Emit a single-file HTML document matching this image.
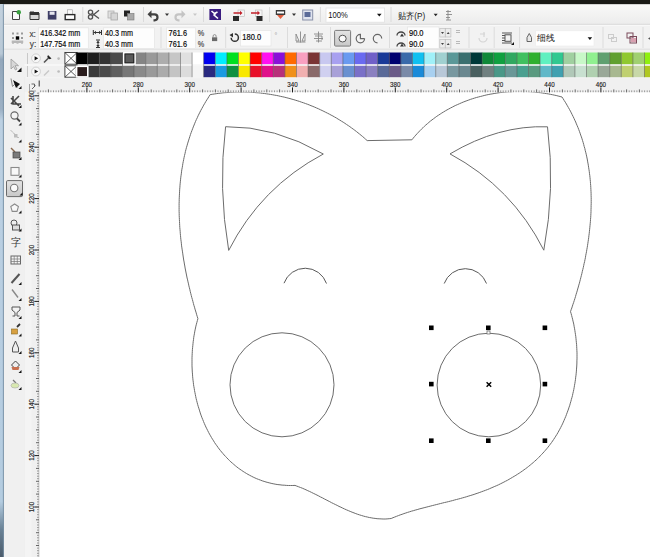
<!DOCTYPE html>
<html><head><meta charset="utf-8">
<style>
*{margin:0;padding:0;box-sizing:border-box}
html,body{width:650px;height:557px;overflow:hidden;background:#f0f0f0;font-family:"Liberation Sans",sans-serif}
svg{position:absolute;left:0;top:0;font-family:"Liberation Sans",sans-serif}
</style></head><body>
<svg width="650" height="557" viewBox="0 0 650 557">
 <defs>
  <linearGradient id="tbg" x1="0" y1="0" x2="0" y2="1"><stop offset="0" stop-color="#f9f9f8"/><stop offset="1" stop-color="#ececec"/></linearGradient>
  <linearGradient id="lsg" x1="0" y1="0" x2="0" y2="1"><stop offset="0" stop-color="#c4d2de"/><stop offset="0.09" stop-color="#b8c8d6"/><stop offset="0.1" stop-color="#94a8bc"/><stop offset="0.19" stop-color="#9cb0c4"/><stop offset="0.21" stop-color="#bcd0e2"/><stop offset="0.9" stop-color="#b4cce0"/><stop offset="0.95" stop-color="#6a8296"/><stop offset="1" stop-color="#4a5a6a"/></linearGradient>
  <linearGradient id="btn" x1="0" y1="0" x2="0" y2="1"><stop offset="0" stop-color="#e4e4e4"/><stop offset="1" stop-color="#c8c8c8"/></linearGradient>
 </defs>
 <!-- base backgrounds -->
 <rect x="0" y="0" width="650" height="557" fill="#f0f0f0"/>
 <!-- canvas -->
 <rect x="39" y="92" width="611" height="465" fill="#ffffff"/>
 <g fill="none" stroke="#6c6c6c" stroke-width="1">
  <path d="M210.2 94.6 L212.2 94.3 L214.2 94.0 L216.2 93.7 L218.2 93.4 L220.2 93.2 L222.2 92.9 L224.2 92.7 L226.2 92.6 L228.2 92.4 L230.2 92.3 L232.2 92.2 L234.3 92.1 L236.3 92.0 L238.3 92.0 L240.3 92.0 L242.3 92.0 L244.3 92.0 L246.3 92.1 L248.3 92.1 L250.4 92.2 L252.4 92.4 L254.4 92.5 L256.4 92.7 L258.4 92.8 L260.4 93.0 L262.4 93.3 L264.4 93.5 L266.4 93.8 L268.4 94.1 L270.4 94.4 L272.3 94.7 L274.3 95.1 L276.3 95.4 L278.3 95.8 L280.3 96.3 L282.2 96.7 L284.2 97.1 L286.1 97.6 L288.1 98.1 L290.0 98.6 L292.0 99.2 L293.9 99.7 L295.8 100.3 L297.8 100.9 L299.7 101.5 L301.6 102.2 L303.5 102.8 L305.4 103.5 L307.3 104.2 L309.2 104.9 L311.0 105.7 L312.9 106.4 L314.8 107.2 L316.6 108.0 L318.5 108.8 L320.3 109.7 L322.1 110.5 L323.9 111.4 L325.7 112.3 L327.5 113.2 L329.3 114.1 L331.1 115.1 L332.9 116.0 L334.6 117.0 L336.4 118.0 L338.1 119.1 L339.8 120.1 L341.5 121.2 L343.2 122.2 L344.9 123.3 L346.6 124.5 L348.3 125.6 L349.9 126.7 L351.5 127.9 L353.2 129.1 L354.8 130.3 L356.4 131.5 L358.0 132.8 L359.5 134.0 L361.1 135.3 L362.7 136.6 L364.2 137.9 L365.7 139.3 L367.2 140.6 L411.9 139.8 L413.2 138.2 L414.5 136.6 L415.8 135.1 L417.2 133.6 L418.6 132.1 L420.0 130.6 L421.4 129.2 L422.9 127.8 L424.3 126.4 L425.8 125.0 L427.4 123.7 L428.9 122.4 L430.4 121.1 L432.0 119.9 L433.6 118.7 L435.2 117.5 L436.8 116.3 L438.5 115.2 L440.2 114.1 L441.8 113.0 L443.5 112.0 L445.3 110.9 L447.0 109.9 L448.7 109.0 L450.5 108.0 L452.3 107.1 L454.0 106.2 L455.8 105.3 L457.7 104.5 L459.5 103.7 L461.3 102.9 L463.2 102.1 L465.0 101.4 L466.9 100.7 L468.8 100.0 L470.7 99.3 L472.6 98.7 L474.5 98.1 L476.4 97.5 L478.4 97.0 L480.3 96.5 L482.3 96.0 L484.2 95.5 L486.2 95.0 L488.2 94.6 L490.1 94.2 L492.1 93.9 L494.1 93.5 L496.1 93.2 L498.1 92.9 L500.1 92.6 L502.1 92.4 L504.1 92.2 L506.1 92.0 L508.1 91.8 L510.1 91.7 L512.2 91.6 L514.2 91.5 L516.2 91.4 L518.2 91.4 L520.3 91.4 L522.3 91.4 L524.3 91.5 L526.3 91.5 L528.3 91.6 L530.3 91.7 L532.4 91.9 L534.4 92.0 L536.4 92.2 L538.4 92.5 L540.4 92.7 L542.4 93.0 L544.4 93.3 L546.4 93.6 L548.3 93.9 L550.3 94.3 L552.3 94.7 L554.2 95.1 L556.2 95.5 L558.1 96.0 L560.1 96.5 L562.0 97.0 L563.1 98.7 L564.2 100.5 L565.3 102.2 L566.4 104.0 L567.4 105.8 L568.4 107.5 L569.4 109.3 L570.4 111.1 L571.3 112.9 L572.2 114.7 L573.1 116.5 L574.0 118.4 L574.8 120.2 L575.7 122.0 L576.4 123.9 L577.2 125.7 L578.0 127.6 L578.7 129.4 L579.4 131.3 L580.1 133.2 L580.7 135.1 L581.4 136.9 L582.0 138.8 L582.6 140.7 L583.2 142.6 L583.7 144.5 L584.2 146.5 L584.8 148.4 L585.2 150.3 L585.7 152.2 L586.2 154.2 L586.6 156.1 L587.0 158.0 L587.4 160.0 L587.7 161.9 L588.1 163.9 L588.4 165.8 L588.7 167.8 L589.0 169.8 L589.3 171.7 L589.5 173.7 L589.8 175.7 L590.0 177.7 L590.2 179.6 L590.4 181.6 L590.5 183.6 L590.7 185.6 L590.8 187.6 L590.9 189.6 L591.0 191.6 L591.1 193.6 L591.1 195.6 L591.2 197.6 L591.2 199.6 L591.2 201.6 L591.2 203.6 L591.1 205.6 L591.1 207.6 L591.0 209.6 L591.0 211.6 L590.9 213.6 L590.8 215.6 L590.7 217.6 L590.5 219.6 L590.4 221.6 L590.2 223.7 L590.0 225.7 L589.8 227.7 L589.6 229.7 L589.4 231.7 L589.2 233.7 L588.9 235.7 L588.7 237.7 L588.4 239.7 L588.1 241.7 L587.8 243.7 L587.5 245.7 L587.2 247.7 L586.8 249.7 L586.5 251.7 L586.1 253.7 L585.7 255.7 L585.4 257.7 L585.0 259.6 L584.6 261.6 L584.1 263.6 L583.7 265.6 L583.3 267.5 L582.8 269.5 L582.3 271.5 L581.9 273.4 L581.4 275.4 L580.9 277.3 L580.4 279.3 L579.9 281.2 L579.4 283.2 L578.8 285.1 L578.3 287.0 L577.7 289.0 L577.2 290.9 L576.6 292.8 L576.0 294.7 L575.5 296.6 L574.9 298.5 L574.3 300.4 L573.7 302.3 L573.0 304.2 L572.4 306.1 L571.8 308.0 L571.1 309.8 L570.5 311.7 L571.1 313.5 L571.6 315.4 L572.1 317.3 L572.6 319.2 L573.0 321.1 L573.5 323.0 L573.9 324.9 L574.2 326.8 L574.6 328.8 L574.9 330.7 L575.2 332.7 L575.5 334.7 L575.8 336.7 L576.0 338.7 L576.2 340.7 L576.4 342.7 L576.6 344.7 L576.7 346.7 L576.8 348.7 L576.9 350.7 L577.0 352.8 L577.0 354.8 L577.0 356.8 L577.0 358.9 L576.9 360.9 L576.9 363.0 L576.8 365.0 L576.7 367.0 L576.5 369.1 L576.4 371.1 L576.2 373.2 L576.0 375.2 L575.7 377.2 L575.5 379.3 L575.2 381.3 L574.9 383.3 L574.5 385.3 L574.2 387.4 L573.8 389.4 L573.4 391.4 L572.9 393.4 L572.5 395.4 L572.0 397.3 L571.4 399.3 L570.9 401.3 L570.3 403.2 L569.8 405.2 L569.1 407.1 L568.5 409.0 L567.8 410.9 L567.1 412.8 L566.4 414.7 L565.7 416.6 L564.9 418.4 L564.1 420.3 L563.3 422.1 L562.5 423.9 L561.6 425.7 L560.7 427.5 L559.8 429.2 L558.8 431.0 L557.9 432.7 L556.9 434.4 L555.8 436.1 L554.8 437.7 L553.7 439.4 L552.6 441.0 L551.5 442.6 L550.3 444.2 L549.2 445.7 L548.0 447.2 L546.7 448.8 L545.5 450.2 L544.2 451.7 L542.9 453.1 L541.6 454.5 L540.2 455.9 L538.9 457.3 L537.5 458.7 L536.1 460.0 L534.6 461.3 L533.2 462.6 L531.7 463.8 L530.2 465.1 L528.7 466.3 L527.2 467.5 L525.6 468.7 L524.0 469.8 L522.4 471.0 L520.8 472.1 L519.2 473.2 L517.6 474.2 L515.9 475.3 L514.2 476.3 L512.5 477.3 L510.8 478.3 L509.1 479.3 L507.4 480.3 L505.6 481.2 L503.9 482.1 L502.1 483.0 L500.3 483.9 L498.5 484.8 L496.7 485.6 L494.8 486.4 L493.0 487.2 L491.1 488.0 L489.3 488.8 L487.4 489.6 L485.5 490.3 L483.6 491.0 L481.7 491.7 L479.8 492.4 L477.9 493.1 L476.0 493.7 L474.1 494.4 L472.1 495.0 L470.2 495.6 L468.2 496.2 L466.3 496.8 L464.3 497.4 L462.4 497.9 L460.4 498.5 L458.4 499.0 L456.5 499.5 L454.5 500.0 L452.5 500.6 L450.5 501.1 L448.5 501.6 L446.6 502.1 L444.6 502.5 L442.6 503.0 L440.6 503.5 L438.7 504.0 L436.7 504.5 L434.7 505.0 L432.7 505.5 L430.8 506.0 L428.8 506.5 L426.9 507.0 L424.9 507.5 L423.0 508.0 L421.0 508.5 L419.1 509.0 L417.2 509.6 L415.2 510.1 L413.3 510.7 L411.4 511.2 L409.5 511.8 L407.6 512.4 L405.8 513.0 L403.9 513.6 L402.1 514.3 L400.2 514.9 L398.4 515.6 L396.6 516.3 L394.8 517.0 L393.0 517.7 L391.2 518.5 L389.2 518.7 L387.1 518.9 L385.1 519.0 L383.1 519.0 L381.1 518.9 L379.1 518.8 L377.1 518.7 L375.1 518.4 L373.2 518.2 L371.2 517.8 L369.3 517.5 L367.3 517.0 L365.4 516.6 L363.5 516.1 L361.6 515.5 L359.6 514.9 L357.7 514.3 L355.8 513.6 L354.0 512.9 L352.1 512.2 L350.2 511.4 L348.3 510.6 L346.4 509.8 L344.6 509.0 L342.7 508.1 L340.9 507.2 L339.0 506.4 L337.2 505.4 L335.3 504.5 L333.5 503.6 L331.6 502.7 L329.8 501.7 L328.0 500.8 L326.1 499.8 L324.3 498.9 L322.5 497.9 L320.6 497.0 L318.8 496.0 L317.0 495.1 L315.2 494.2 L313.3 493.3 L311.5 492.4 L309.7 491.5 L307.8 490.7 L306.0 489.8 L304.2 489.0 L302.3 488.2 L300.5 487.5 L298.7 486.8 L296.8 486.1 L295.0 485.4 L292.8 485.5 L290.6 485.5 L288.4 485.5 L286.3 485.4 L284.2 485.2 L282.1 485.1 L280.0 484.8 L277.9 484.6 L275.9 484.3 L273.9 483.9 L271.9 483.5 L269.9 483.0 L267.9 482.5 L266.0 482.0 L264.1 481.4 L262.2 480.8 L260.4 480.1 L258.5 479.4 L256.7 478.7 L254.9 477.9 L253.2 477.1 L251.4 476.2 L249.7 475.3 L248.0 474.4 L246.3 473.4 L244.7 472.4 L243.1 471.4 L241.5 470.3 L239.9 469.2 L238.3 468.1 L236.8 466.9 L235.3 465.7 L233.8 464.4 L232.4 463.2 L230.9 461.9 L229.5 460.6 L228.2 459.2 L226.8 457.8 L225.5 456.4 L224.2 455.0 L222.9 453.5 L221.6 452.0 L220.4 450.5 L219.2 449.0 L218.0 447.4 L216.9 445.8 L215.7 444.2 L214.6 442.6 L213.6 440.9 L212.5 439.2 L211.5 437.6 L210.5 435.8 L209.5 434.1 L208.6 432.4 L207.7 430.6 L206.8 428.8 L205.9 427.0 L205.1 425.2 L204.3 423.4 L203.5 421.5 L202.8 419.7 L202.0 417.8 L201.3 415.9 L200.6 414.0 L200.0 412.1 L199.4 410.1 L198.8 408.2 L198.2 406.3 L197.6 404.3 L197.1 402.3 L196.6 400.4 L196.1 398.4 L195.7 396.4 L195.3 394.4 L194.9 392.4 L194.5 390.4 L194.2 388.3 L193.8 386.3 L193.5 384.3 L193.3 382.3 L193.0 380.2 L192.8 378.2 L192.6 376.2 L192.5 374.1 L192.3 372.1 L192.2 370.0 L192.1 368.0 L192.0 365.9 L192.0 363.9 L192.0 361.9 L192.0 359.8 L192.0 357.8 L192.1 355.8 L192.2 353.7 L192.3 351.7 L192.4 349.7 L192.6 347.7 L192.8 345.7 L193.0 343.7 L193.2 341.7 L193.5 339.7 L193.7 337.7 L194.0 335.8 L194.4 333.8 L194.7 331.9 L195.1 329.9 L195.5 328.0 L195.9 326.1 L196.4 324.2 L196.9 322.3 L197.4 320.5 L197.9 318.6 L197.3 316.7 L196.7 314.8 L196.2 312.9 L195.6 311.0 L195.0 309.1 L194.5 307.2 L193.9 305.3 L193.4 303.4 L192.9 301.5 L192.4 299.5 L191.8 297.6 L191.3 295.6 L190.8 293.7 L190.3 291.7 L189.9 289.8 L189.4 287.8 L188.9 285.9 L188.5 283.9 L188.0 281.9 L187.6 279.9 L187.1 278.0 L186.7 276.0 L186.3 274.0 L185.9 272.0 L185.5 270.0 L185.1 268.0 L184.8 266.0 L184.4 264.0 L184.1 262.0 L183.7 260.0 L183.4 258.0 L183.1 256.0 L182.8 253.9 L182.5 251.9 L182.2 249.9 L181.9 247.9 L181.6 245.9 L181.4 243.8 L181.2 241.8 L180.9 239.8 L180.7 237.8 L180.5 235.7 L180.3 233.7 L180.2 231.7 L180.0 229.7 L179.8 227.6 L179.7 225.6 L179.6 223.6 L179.5 221.5 L179.4 219.5 L179.3 217.5 L179.2 215.4 L179.2 213.4 L179.1 211.4 L179.1 209.4 L179.1 207.3 L179.1 205.3 L179.1 203.3 L179.2 201.3 L179.2 199.3 L179.3 197.2 L179.4 195.2 L179.5 193.2 L179.6 191.2 L179.7 189.2 L179.9 187.2 L180.0 185.2 L180.2 183.2 L180.4 181.2 L180.6 179.2 L180.8 177.2 L181.1 175.2 L181.4 173.2 L181.6 171.2 L181.9 169.2 L182.3 167.3 L182.6 165.3 L182.9 163.3 L183.3 161.4 L183.7 159.4 L184.1 157.4 L184.5 155.5 L185.0 153.6 L185.4 151.6 L185.9 149.7 L186.4 147.7 L187.0 145.8 L187.5 143.9 L188.1 142.0 L188.7 140.1 L189.3 138.2 L189.9 136.3 L190.5 134.4 L191.2 132.5 L191.9 130.6 L192.6 128.8 L193.3 126.9 L194.1 125.0 L194.8 123.2 L195.6 121.3 L196.4 119.5 L197.3 117.7 L198.1 115.8 L199.0 114.0 L199.9 112.2 L200.8 110.4 L201.8 108.6 L202.8 106.8 L203.7 105.1 L204.8 103.3 L205.8 101.5 L206.9 99.8 L208.0 98.1 L209.1 96.3 L210.2 94.6 Z"/>
  <path d="M225.6 126.7 Q274.5 126 323.3 154 Q260.8 187.2 228.7 250.4 Q218 188.5 225.6 126.7 Z"/>
  <path d="M450 153.9 Q498.8 124.9 547.5 126.8 Q555.4 188.5 543.8 250.2 Q512.1 187.3 450 153.9 Z"/>
  <circle cx="282" cy="384.8" r="52"/>
  <circle cx="488.9" cy="385" r="51.8"/>
  <path d="M284 283.2 A22.5 22.5 0 0 1 326.5 283.5" stroke="#585858" stroke-width="1"/>
  <path d="M444.2 283.5 A22.5 22.5 0 0 1 486.5 283.5" stroke="#585858" stroke-width="1"/>
 </g>
 <rect x="487" y="331" width="3" height="3" fill="#fff" stroke="#666" stroke-width="0.7"/>
 <g fill="#000">
  <rect x="429" y="325.5" width="4.6" height="4.6"/><rect x="486" y="325.5" width="4.6" height="4.6"/><rect x="542.6" y="325.5" width="4.6" height="4.6"/>
  <rect x="429" y="381.8" width="4.6" height="4.6"/><rect x="542.6" y="381.8" width="4.6" height="4.6"/>
  <rect x="429" y="438.4" width="4.6" height="4.6"/><rect x="486" y="438.4" width="4.6" height="4.6"/><rect x="542.6" y="438.4" width="4.6" height="4.6"/>
 </g>
 <path d="M486.6 382.2 l4.6 4.6 M491.2 382.2 l-4.6 4.6" stroke="#000" stroke-width="1.4"/>

 <!-- rulers -->
 <rect x="26" y="77" width="624" height="15.3" fill="#f0f0f0"/>
 <rect x="26" y="77" width="13" height="480" fill="#f0f0f0"/>
 <line x1="26" y1="77.8" x2="650" y2="77.8" stroke="#fafafa" stroke-width="0.8"/>
 <line x1="38.9" y1="92" x2="38.9" y2="557" stroke="#a0a0a0" stroke-width="0.6"/>
 <line x1="24" y1="77" x2="24" y2="557" stroke="#e2e2e2" stroke-width="0.8"/>
 <rect x="24.5" y="92" width="7" height="465" fill="#f4f4f4"/>
 <line x1="39.2" y1="80.5" x2="39.2" y2="86.5" stroke="#333" stroke-width="1"/>
 <g>
 <line x1="40.6" y1="90.4" x2="40.6" y2="92.2" stroke="#808080" stroke-width="0.8"/>
<line x1="43.2" y1="90.4" x2="43.2" y2="92.2" stroke="#808080" stroke-width="0.8"/>
<line x1="45.8" y1="90.4" x2="45.8" y2="92.2" stroke="#808080" stroke-width="0.8"/>
<line x1="48.4" y1="89.4" x2="48.4" y2="92.4" stroke="#555" stroke-width="0.9"/>
<line x1="50.9" y1="90.4" x2="50.9" y2="92.2" stroke="#808080" stroke-width="0.8"/>
<line x1="53.5" y1="90.4" x2="53.5" y2="92.2" stroke="#808080" stroke-width="0.8"/>
<line x1="56.1" y1="90.4" x2="56.1" y2="92.2" stroke="#808080" stroke-width="0.8"/>
<line x1="58.6" y1="90.4" x2="58.6" y2="92.2" stroke="#808080" stroke-width="0.8"/>
<line x1="61.2" y1="89.4" x2="61.2" y2="92.4" stroke="#555" stroke-width="0.9"/>
<line x1="63.8" y1="90.4" x2="63.8" y2="92.2" stroke="#808080" stroke-width="0.8"/>
<line x1="66.3" y1="90.4" x2="66.3" y2="92.2" stroke="#808080" stroke-width="0.8"/>
<line x1="68.9" y1="90.4" x2="68.9" y2="92.2" stroke="#808080" stroke-width="0.8"/>
<line x1="71.5" y1="90.4" x2="71.5" y2="92.2" stroke="#808080" stroke-width="0.8"/>
<line x1="74.1" y1="89.4" x2="74.1" y2="92.4" stroke="#555" stroke-width="0.9"/>
<line x1="76.6" y1="90.4" x2="76.6" y2="92.2" stroke="#808080" stroke-width="0.8"/>
<line x1="79.2" y1="90.4" x2="79.2" y2="92.2" stroke="#808080" stroke-width="0.8"/>
<line x1="81.8" y1="90.4" x2="81.8" y2="92.2" stroke="#808080" stroke-width="0.8"/>
<line x1="84.3" y1="90.4" x2="84.3" y2="92.2" stroke="#808080" stroke-width="0.8"/>
<line x1="86.9" y1="87.4" x2="86.9" y2="92.4" stroke="#1a1a1a" stroke-width="1"/>
<line x1="89.5" y1="90.4" x2="89.5" y2="92.2" stroke="#808080" stroke-width="0.8"/>
<line x1="92.0" y1="90.4" x2="92.0" y2="92.2" stroke="#808080" stroke-width="0.8"/>
<line x1="94.6" y1="90.4" x2="94.6" y2="92.2" stroke="#808080" stroke-width="0.8"/>
<line x1="97.2" y1="90.4" x2="97.2" y2="92.2" stroke="#808080" stroke-width="0.8"/>
<line x1="99.8" y1="89.4" x2="99.8" y2="92.4" stroke="#555" stroke-width="0.9"/>
<line x1="102.3" y1="90.4" x2="102.3" y2="92.2" stroke="#808080" stroke-width="0.8"/>
<line x1="104.9" y1="90.4" x2="104.9" y2="92.2" stroke="#808080" stroke-width="0.8"/>
<line x1="107.5" y1="90.4" x2="107.5" y2="92.2" stroke="#808080" stroke-width="0.8"/>
<line x1="110.0" y1="90.4" x2="110.0" y2="92.2" stroke="#808080" stroke-width="0.8"/>
<line x1="112.6" y1="89.4" x2="112.6" y2="92.4" stroke="#555" stroke-width="0.9"/>
<line x1="115.2" y1="90.4" x2="115.2" y2="92.2" stroke="#808080" stroke-width="0.8"/>
<line x1="117.7" y1="90.4" x2="117.7" y2="92.2" stroke="#808080" stroke-width="0.8"/>
<line x1="120.3" y1="90.4" x2="120.3" y2="92.2" stroke="#808080" stroke-width="0.8"/>
<line x1="122.9" y1="90.4" x2="122.9" y2="92.2" stroke="#808080" stroke-width="0.8"/>
<line x1="125.5" y1="89.4" x2="125.5" y2="92.4" stroke="#555" stroke-width="0.9"/>
<line x1="128.0" y1="90.4" x2="128.0" y2="92.2" stroke="#808080" stroke-width="0.8"/>
<line x1="130.6" y1="90.4" x2="130.6" y2="92.2" stroke="#808080" stroke-width="0.8"/>
<line x1="133.2" y1="90.4" x2="133.2" y2="92.2" stroke="#808080" stroke-width="0.8"/>
<line x1="135.7" y1="90.4" x2="135.7" y2="92.2" stroke="#808080" stroke-width="0.8"/>
<line x1="138.3" y1="87.4" x2="138.3" y2="92.4" stroke="#1a1a1a" stroke-width="1"/>
<line x1="140.9" y1="90.4" x2="140.9" y2="92.2" stroke="#808080" stroke-width="0.8"/>
<line x1="143.4" y1="90.4" x2="143.4" y2="92.2" stroke="#808080" stroke-width="0.8"/>
<line x1="146.0" y1="90.4" x2="146.0" y2="92.2" stroke="#808080" stroke-width="0.8"/>
<line x1="148.6" y1="90.4" x2="148.6" y2="92.2" stroke="#808080" stroke-width="0.8"/>
<line x1="151.2" y1="89.4" x2="151.2" y2="92.4" stroke="#555" stroke-width="0.9"/>
<line x1="153.7" y1="90.4" x2="153.7" y2="92.2" stroke="#808080" stroke-width="0.8"/>
<line x1="156.3" y1="90.4" x2="156.3" y2="92.2" stroke="#808080" stroke-width="0.8"/>
<line x1="158.9" y1="90.4" x2="158.9" y2="92.2" stroke="#808080" stroke-width="0.8"/>
<line x1="161.4" y1="90.4" x2="161.4" y2="92.2" stroke="#808080" stroke-width="0.8"/>
<line x1="164.0" y1="89.4" x2="164.0" y2="92.4" stroke="#555" stroke-width="0.9"/>
<line x1="166.6" y1="90.4" x2="166.6" y2="92.2" stroke="#808080" stroke-width="0.8"/>
<line x1="169.1" y1="90.4" x2="169.1" y2="92.2" stroke="#808080" stroke-width="0.8"/>
<line x1="171.7" y1="90.4" x2="171.7" y2="92.2" stroke="#808080" stroke-width="0.8"/>
<line x1="174.3" y1="90.4" x2="174.3" y2="92.2" stroke="#808080" stroke-width="0.8"/>
<line x1="176.8" y1="89.4" x2="176.8" y2="92.4" stroke="#555" stroke-width="0.9"/>
<line x1="179.4" y1="90.4" x2="179.4" y2="92.2" stroke="#808080" stroke-width="0.8"/>
<line x1="182.0" y1="90.4" x2="182.0" y2="92.2" stroke="#808080" stroke-width="0.8"/>
<line x1="184.6" y1="90.4" x2="184.6" y2="92.2" stroke="#808080" stroke-width="0.8"/>
<line x1="187.1" y1="90.4" x2="187.1" y2="92.2" stroke="#808080" stroke-width="0.8"/>
<line x1="189.7" y1="87.4" x2="189.7" y2="92.4" stroke="#1a1a1a" stroke-width="1"/>
<line x1="192.3" y1="90.4" x2="192.3" y2="92.2" stroke="#808080" stroke-width="0.8"/>
<line x1="194.8" y1="90.4" x2="194.8" y2="92.2" stroke="#808080" stroke-width="0.8"/>
<line x1="197.4" y1="90.4" x2="197.4" y2="92.2" stroke="#808080" stroke-width="0.8"/>
<line x1="200.0" y1="90.4" x2="200.0" y2="92.2" stroke="#808080" stroke-width="0.8"/>
<line x1="202.6" y1="89.4" x2="202.6" y2="92.4" stroke="#555" stroke-width="0.9"/>
<line x1="205.1" y1="90.4" x2="205.1" y2="92.2" stroke="#808080" stroke-width="0.8"/>
<line x1="207.7" y1="90.4" x2="207.7" y2="92.2" stroke="#808080" stroke-width="0.8"/>
<line x1="210.3" y1="90.4" x2="210.3" y2="92.2" stroke="#808080" stroke-width="0.8"/>
<line x1="212.8" y1="90.4" x2="212.8" y2="92.2" stroke="#808080" stroke-width="0.8"/>
<line x1="215.4" y1="89.4" x2="215.4" y2="92.4" stroke="#555" stroke-width="0.9"/>
<line x1="218.0" y1="90.4" x2="218.0" y2="92.2" stroke="#808080" stroke-width="0.8"/>
<line x1="220.5" y1="90.4" x2="220.5" y2="92.2" stroke="#808080" stroke-width="0.8"/>
<line x1="223.1" y1="90.4" x2="223.1" y2="92.2" stroke="#808080" stroke-width="0.8"/>
<line x1="225.7" y1="90.4" x2="225.7" y2="92.2" stroke="#808080" stroke-width="0.8"/>
<line x1="228.2" y1="89.4" x2="228.2" y2="92.4" stroke="#555" stroke-width="0.9"/>
<line x1="230.8" y1="90.4" x2="230.8" y2="92.2" stroke="#808080" stroke-width="0.8"/>
<line x1="233.4" y1="90.4" x2="233.4" y2="92.2" stroke="#808080" stroke-width="0.8"/>
<line x1="236.0" y1="90.4" x2="236.0" y2="92.2" stroke="#808080" stroke-width="0.8"/>
<line x1="238.5" y1="90.4" x2="238.5" y2="92.2" stroke="#808080" stroke-width="0.8"/>
<line x1="241.1" y1="87.4" x2="241.1" y2="92.4" stroke="#1a1a1a" stroke-width="1"/>
<line x1="243.7" y1="90.4" x2="243.7" y2="92.2" stroke="#808080" stroke-width="0.8"/>
<line x1="246.2" y1="90.4" x2="246.2" y2="92.2" stroke="#808080" stroke-width="0.8"/>
<line x1="248.8" y1="90.4" x2="248.8" y2="92.2" stroke="#808080" stroke-width="0.8"/>
<line x1="251.4" y1="90.4" x2="251.4" y2="92.2" stroke="#808080" stroke-width="0.8"/>
<line x1="253.9" y1="89.4" x2="253.9" y2="92.4" stroke="#555" stroke-width="0.9"/>
<line x1="256.5" y1="90.4" x2="256.5" y2="92.2" stroke="#808080" stroke-width="0.8"/>
<line x1="259.1" y1="90.4" x2="259.1" y2="92.2" stroke="#808080" stroke-width="0.8"/>
<line x1="261.7" y1="90.4" x2="261.7" y2="92.2" stroke="#808080" stroke-width="0.8"/>
<line x1="264.2" y1="90.4" x2="264.2" y2="92.2" stroke="#808080" stroke-width="0.8"/>
<line x1="266.8" y1="89.4" x2="266.8" y2="92.4" stroke="#555" stroke-width="0.9"/>
<line x1="269.4" y1="90.4" x2="269.4" y2="92.2" stroke="#808080" stroke-width="0.8"/>
<line x1="271.9" y1="90.4" x2="271.9" y2="92.2" stroke="#808080" stroke-width="0.8"/>
<line x1="274.5" y1="90.4" x2="274.5" y2="92.2" stroke="#808080" stroke-width="0.8"/>
<line x1="277.1" y1="90.4" x2="277.1" y2="92.2" stroke="#808080" stroke-width="0.8"/>
<line x1="279.6" y1="89.4" x2="279.6" y2="92.4" stroke="#555" stroke-width="0.9"/>
<line x1="282.2" y1="90.4" x2="282.2" y2="92.2" stroke="#808080" stroke-width="0.8"/>
<line x1="284.8" y1="90.4" x2="284.8" y2="92.2" stroke="#808080" stroke-width="0.8"/>
<line x1="287.4" y1="90.4" x2="287.4" y2="92.2" stroke="#808080" stroke-width="0.8"/>
<line x1="289.9" y1="90.4" x2="289.9" y2="92.2" stroke="#808080" stroke-width="0.8"/>
<line x1="292.5" y1="87.4" x2="292.5" y2="92.4" stroke="#1a1a1a" stroke-width="1"/>
<line x1="295.1" y1="90.4" x2="295.1" y2="92.2" stroke="#808080" stroke-width="0.8"/>
<line x1="297.6" y1="90.4" x2="297.6" y2="92.2" stroke="#808080" stroke-width="0.8"/>
<line x1="300.2" y1="90.4" x2="300.2" y2="92.2" stroke="#808080" stroke-width="0.8"/>
<line x1="302.8" y1="90.4" x2="302.8" y2="92.2" stroke="#808080" stroke-width="0.8"/>
<line x1="305.4" y1="89.4" x2="305.4" y2="92.4" stroke="#555" stroke-width="0.9"/>
<line x1="307.9" y1="90.4" x2="307.9" y2="92.2" stroke="#808080" stroke-width="0.8"/>
<line x1="310.5" y1="90.4" x2="310.5" y2="92.2" stroke="#808080" stroke-width="0.8"/>
<line x1="313.1" y1="90.4" x2="313.1" y2="92.2" stroke="#808080" stroke-width="0.8"/>
<line x1="315.6" y1="90.4" x2="315.6" y2="92.2" stroke="#808080" stroke-width="0.8"/>
<line x1="318.2" y1="89.4" x2="318.2" y2="92.4" stroke="#555" stroke-width="0.9"/>
<line x1="320.8" y1="90.4" x2="320.8" y2="92.2" stroke="#808080" stroke-width="0.8"/>
<line x1="323.3" y1="90.4" x2="323.3" y2="92.2" stroke="#808080" stroke-width="0.8"/>
<line x1="325.9" y1="90.4" x2="325.9" y2="92.2" stroke="#808080" stroke-width="0.8"/>
<line x1="328.5" y1="90.4" x2="328.5" y2="92.2" stroke="#808080" stroke-width="0.8"/>
<line x1="331.0" y1="89.4" x2="331.0" y2="92.4" stroke="#555" stroke-width="0.9"/>
<line x1="333.6" y1="90.4" x2="333.6" y2="92.2" stroke="#808080" stroke-width="0.8"/>
<line x1="336.2" y1="90.4" x2="336.2" y2="92.2" stroke="#808080" stroke-width="0.8"/>
<line x1="338.8" y1="90.4" x2="338.8" y2="92.2" stroke="#808080" stroke-width="0.8"/>
<line x1="341.3" y1="90.4" x2="341.3" y2="92.2" stroke="#808080" stroke-width="0.8"/>
<line x1="343.9" y1="87.4" x2="343.9" y2="92.4" stroke="#1a1a1a" stroke-width="1"/>
<line x1="346.5" y1="90.4" x2="346.5" y2="92.2" stroke="#808080" stroke-width="0.8"/>
<line x1="349.0" y1="90.4" x2="349.0" y2="92.2" stroke="#808080" stroke-width="0.8"/>
<line x1="351.6" y1="90.4" x2="351.6" y2="92.2" stroke="#808080" stroke-width="0.8"/>
<line x1="354.2" y1="90.4" x2="354.2" y2="92.2" stroke="#808080" stroke-width="0.8"/>
<line x1="356.8" y1="89.4" x2="356.8" y2="92.4" stroke="#555" stroke-width="0.9"/>
<line x1="359.3" y1="90.4" x2="359.3" y2="92.2" stroke="#808080" stroke-width="0.8"/>
<line x1="361.9" y1="90.4" x2="361.9" y2="92.2" stroke="#808080" stroke-width="0.8"/>
<line x1="364.5" y1="90.4" x2="364.5" y2="92.2" stroke="#808080" stroke-width="0.8"/>
<line x1="367.0" y1="90.4" x2="367.0" y2="92.2" stroke="#808080" stroke-width="0.8"/>
<line x1="369.6" y1="89.4" x2="369.6" y2="92.4" stroke="#555" stroke-width="0.9"/>
<line x1="372.2" y1="90.4" x2="372.2" y2="92.2" stroke="#808080" stroke-width="0.8"/>
<line x1="374.7" y1="90.4" x2="374.7" y2="92.2" stroke="#808080" stroke-width="0.8"/>
<line x1="377.3" y1="90.4" x2="377.3" y2="92.2" stroke="#808080" stroke-width="0.8"/>
<line x1="379.9" y1="90.4" x2="379.9" y2="92.2" stroke="#808080" stroke-width="0.8"/>
<line x1="382.4" y1="89.4" x2="382.4" y2="92.4" stroke="#555" stroke-width="0.9"/>
<line x1="385.0" y1="90.4" x2="385.0" y2="92.2" stroke="#808080" stroke-width="0.8"/>
<line x1="387.6" y1="90.4" x2="387.6" y2="92.2" stroke="#808080" stroke-width="0.8"/>
<line x1="390.2" y1="90.4" x2="390.2" y2="92.2" stroke="#808080" stroke-width="0.8"/>
<line x1="392.7" y1="90.4" x2="392.7" y2="92.2" stroke="#808080" stroke-width="0.8"/>
<line x1="395.3" y1="87.4" x2="395.3" y2="92.4" stroke="#1a1a1a" stroke-width="1"/>
<line x1="397.9" y1="90.4" x2="397.9" y2="92.2" stroke="#808080" stroke-width="0.8"/>
<line x1="400.4" y1="90.4" x2="400.4" y2="92.2" stroke="#808080" stroke-width="0.8"/>
<line x1="403.0" y1="90.4" x2="403.0" y2="92.2" stroke="#808080" stroke-width="0.8"/>
<line x1="405.6" y1="90.4" x2="405.6" y2="92.2" stroke="#808080" stroke-width="0.8"/>
<line x1="408.1" y1="89.4" x2="408.1" y2="92.4" stroke="#555" stroke-width="0.9"/>
<line x1="410.7" y1="90.4" x2="410.7" y2="92.2" stroke="#808080" stroke-width="0.8"/>
<line x1="413.3" y1="90.4" x2="413.3" y2="92.2" stroke="#808080" stroke-width="0.8"/>
<line x1="415.9" y1="90.4" x2="415.9" y2="92.2" stroke="#808080" stroke-width="0.8"/>
<line x1="418.4" y1="90.4" x2="418.4" y2="92.2" stroke="#808080" stroke-width="0.8"/>
<line x1="421.0" y1="89.4" x2="421.0" y2="92.4" stroke="#555" stroke-width="0.9"/>
<line x1="423.6" y1="90.4" x2="423.6" y2="92.2" stroke="#808080" stroke-width="0.8"/>
<line x1="426.1" y1="90.4" x2="426.1" y2="92.2" stroke="#808080" stroke-width="0.8"/>
<line x1="428.7" y1="90.4" x2="428.7" y2="92.2" stroke="#808080" stroke-width="0.8"/>
<line x1="431.3" y1="90.4" x2="431.3" y2="92.2" stroke="#808080" stroke-width="0.8"/>
<line x1="433.9" y1="89.4" x2="433.9" y2="92.4" stroke="#555" stroke-width="0.9"/>
<line x1="436.4" y1="90.4" x2="436.4" y2="92.2" stroke="#808080" stroke-width="0.8"/>
<line x1="439.0" y1="90.4" x2="439.0" y2="92.2" stroke="#808080" stroke-width="0.8"/>
<line x1="441.6" y1="90.4" x2="441.6" y2="92.2" stroke="#808080" stroke-width="0.8"/>
<line x1="444.1" y1="90.4" x2="444.1" y2="92.2" stroke="#808080" stroke-width="0.8"/>
<line x1="446.7" y1="87.4" x2="446.7" y2="92.4" stroke="#1a1a1a" stroke-width="1"/>
<line x1="449.3" y1="90.4" x2="449.3" y2="92.2" stroke="#808080" stroke-width="0.8"/>
<line x1="451.8" y1="90.4" x2="451.8" y2="92.2" stroke="#808080" stroke-width="0.8"/>
<line x1="454.4" y1="90.4" x2="454.4" y2="92.2" stroke="#808080" stroke-width="0.8"/>
<line x1="457.0" y1="90.4" x2="457.0" y2="92.2" stroke="#808080" stroke-width="0.8"/>
<line x1="459.5" y1="89.4" x2="459.5" y2="92.4" stroke="#555" stroke-width="0.9"/>
<line x1="462.1" y1="90.4" x2="462.1" y2="92.2" stroke="#808080" stroke-width="0.8"/>
<line x1="464.7" y1="90.4" x2="464.7" y2="92.2" stroke="#808080" stroke-width="0.8"/>
<line x1="467.3" y1="90.4" x2="467.3" y2="92.2" stroke="#808080" stroke-width="0.8"/>
<line x1="469.8" y1="90.4" x2="469.8" y2="92.2" stroke="#808080" stroke-width="0.8"/>
<line x1="472.4" y1="89.4" x2="472.4" y2="92.4" stroke="#555" stroke-width="0.9"/>
<line x1="475.0" y1="90.4" x2="475.0" y2="92.2" stroke="#808080" stroke-width="0.8"/>
<line x1="477.5" y1="90.4" x2="477.5" y2="92.2" stroke="#808080" stroke-width="0.8"/>
<line x1="480.1" y1="90.4" x2="480.1" y2="92.2" stroke="#808080" stroke-width="0.8"/>
<line x1="482.7" y1="90.4" x2="482.7" y2="92.2" stroke="#808080" stroke-width="0.8"/>
<line x1="485.2" y1="89.4" x2="485.2" y2="92.4" stroke="#555" stroke-width="0.9"/>
<line x1="487.8" y1="90.4" x2="487.8" y2="92.2" stroke="#808080" stroke-width="0.8"/>
<line x1="490.4" y1="90.4" x2="490.4" y2="92.2" stroke="#808080" stroke-width="0.8"/>
<line x1="493.0" y1="90.4" x2="493.0" y2="92.2" stroke="#808080" stroke-width="0.8"/>
<line x1="495.5" y1="90.4" x2="495.5" y2="92.2" stroke="#808080" stroke-width="0.8"/>
<line x1="498.1" y1="87.4" x2="498.1" y2="92.4" stroke="#1a1a1a" stroke-width="1"/>
<line x1="500.7" y1="90.4" x2="500.7" y2="92.2" stroke="#808080" stroke-width="0.8"/>
<line x1="503.2" y1="90.4" x2="503.2" y2="92.2" stroke="#808080" stroke-width="0.8"/>
<line x1="505.8" y1="90.4" x2="505.8" y2="92.2" stroke="#808080" stroke-width="0.8"/>
<line x1="508.4" y1="90.4" x2="508.4" y2="92.2" stroke="#808080" stroke-width="0.8"/>
<line x1="510.9" y1="89.4" x2="510.9" y2="92.4" stroke="#555" stroke-width="0.9"/>
<line x1="513.5" y1="90.4" x2="513.5" y2="92.2" stroke="#808080" stroke-width="0.8"/>
<line x1="516.1" y1="90.4" x2="516.1" y2="92.2" stroke="#808080" stroke-width="0.8"/>
<line x1="518.7" y1="90.4" x2="518.7" y2="92.2" stroke="#808080" stroke-width="0.8"/>
<line x1="521.2" y1="90.4" x2="521.2" y2="92.2" stroke="#808080" stroke-width="0.8"/>
<line x1="523.8" y1="89.4" x2="523.8" y2="92.4" stroke="#555" stroke-width="0.9"/>
<line x1="526.4" y1="90.4" x2="526.4" y2="92.2" stroke="#808080" stroke-width="0.8"/>
<line x1="528.9" y1="90.4" x2="528.9" y2="92.2" stroke="#808080" stroke-width="0.8"/>
<line x1="531.5" y1="90.4" x2="531.5" y2="92.2" stroke="#808080" stroke-width="0.8"/>
<line x1="534.1" y1="90.4" x2="534.1" y2="92.2" stroke="#808080" stroke-width="0.8"/>
<line x1="536.6" y1="89.4" x2="536.6" y2="92.4" stroke="#555" stroke-width="0.9"/>
<line x1="539.2" y1="90.4" x2="539.2" y2="92.2" stroke="#808080" stroke-width="0.8"/>
<line x1="541.8" y1="90.4" x2="541.8" y2="92.2" stroke="#808080" stroke-width="0.8"/>
<line x1="544.4" y1="90.4" x2="544.4" y2="92.2" stroke="#808080" stroke-width="0.8"/>
<line x1="546.9" y1="90.4" x2="546.9" y2="92.2" stroke="#808080" stroke-width="0.8"/>
<line x1="549.5" y1="87.4" x2="549.5" y2="92.4" stroke="#1a1a1a" stroke-width="1"/>
<line x1="552.1" y1="90.4" x2="552.1" y2="92.2" stroke="#808080" stroke-width="0.8"/>
<line x1="554.6" y1="90.4" x2="554.6" y2="92.2" stroke="#808080" stroke-width="0.8"/>
<line x1="557.2" y1="90.4" x2="557.2" y2="92.2" stroke="#808080" stroke-width="0.8"/>
<line x1="559.8" y1="90.4" x2="559.8" y2="92.2" stroke="#808080" stroke-width="0.8"/>
<line x1="562.4" y1="89.4" x2="562.4" y2="92.4" stroke="#555" stroke-width="0.9"/>
<line x1="564.9" y1="90.4" x2="564.9" y2="92.2" stroke="#808080" stroke-width="0.8"/>
<line x1="567.5" y1="90.4" x2="567.5" y2="92.2" stroke="#808080" stroke-width="0.8"/>
<line x1="570.1" y1="90.4" x2="570.1" y2="92.2" stroke="#808080" stroke-width="0.8"/>
<line x1="572.6" y1="90.4" x2="572.6" y2="92.2" stroke="#808080" stroke-width="0.8"/>
<line x1="575.2" y1="89.4" x2="575.2" y2="92.4" stroke="#555" stroke-width="0.9"/>
<line x1="577.8" y1="90.4" x2="577.8" y2="92.2" stroke="#808080" stroke-width="0.8"/>
<line x1="580.3" y1="90.4" x2="580.3" y2="92.2" stroke="#808080" stroke-width="0.8"/>
<line x1="582.9" y1="90.4" x2="582.9" y2="92.2" stroke="#808080" stroke-width="0.8"/>
<line x1="585.5" y1="90.4" x2="585.5" y2="92.2" stroke="#808080" stroke-width="0.8"/>
<line x1="588.0" y1="89.4" x2="588.0" y2="92.4" stroke="#555" stroke-width="0.9"/>
<line x1="590.6" y1="90.4" x2="590.6" y2="92.2" stroke="#808080" stroke-width="0.8"/>
<line x1="593.2" y1="90.4" x2="593.2" y2="92.2" stroke="#808080" stroke-width="0.8"/>
<line x1="595.8" y1="90.4" x2="595.8" y2="92.2" stroke="#808080" stroke-width="0.8"/>
<line x1="598.3" y1="90.4" x2="598.3" y2="92.2" stroke="#808080" stroke-width="0.8"/>
<line x1="600.9" y1="87.4" x2="600.9" y2="92.4" stroke="#1a1a1a" stroke-width="1"/>
<line x1="603.5" y1="90.4" x2="603.5" y2="92.2" stroke="#808080" stroke-width="0.8"/>
<line x1="606.0" y1="90.4" x2="606.0" y2="92.2" stroke="#808080" stroke-width="0.8"/>
<line x1="608.6" y1="90.4" x2="608.6" y2="92.2" stroke="#808080" stroke-width="0.8"/>
<line x1="611.2" y1="90.4" x2="611.2" y2="92.2" stroke="#808080" stroke-width="0.8"/>
<line x1="613.8" y1="89.4" x2="613.8" y2="92.4" stroke="#555" stroke-width="0.9"/>
<line x1="616.3" y1="90.4" x2="616.3" y2="92.2" stroke="#808080" stroke-width="0.8"/>
<line x1="618.9" y1="90.4" x2="618.9" y2="92.2" stroke="#808080" stroke-width="0.8"/>
<line x1="621.5" y1="90.4" x2="621.5" y2="92.2" stroke="#808080" stroke-width="0.8"/>
<line x1="624.0" y1="90.4" x2="624.0" y2="92.2" stroke="#808080" stroke-width="0.8"/>
<line x1="626.6" y1="89.4" x2="626.6" y2="92.4" stroke="#555" stroke-width="0.9"/>
<line x1="629.2" y1="90.4" x2="629.2" y2="92.2" stroke="#808080" stroke-width="0.8"/>
<line x1="631.7" y1="90.4" x2="631.7" y2="92.2" stroke="#808080" stroke-width="0.8"/>
<line x1="634.3" y1="90.4" x2="634.3" y2="92.2" stroke="#808080" stroke-width="0.8"/>
<line x1="636.9" y1="90.4" x2="636.9" y2="92.2" stroke="#808080" stroke-width="0.8"/>
<line x1="639.4" y1="89.4" x2="639.4" y2="92.4" stroke="#555" stroke-width="0.9"/>
<line x1="642.0" y1="90.4" x2="642.0" y2="92.2" stroke="#808080" stroke-width="0.8"/>
<line x1="644.6" y1="90.4" x2="644.6" y2="92.2" stroke="#808080" stroke-width="0.8"/>
<line x1="647.2" y1="90.4" x2="647.2" y2="92.2" stroke="#808080" stroke-width="0.8"/>
<line x1="649.7" y1="90.4" x2="649.7" y2="92.2" stroke="#808080" stroke-width="0.8"/>
<line x1="652.3" y1="87.4" x2="652.3" y2="92.4" stroke="#1a1a1a" stroke-width="1"/>
<line x1="654.9" y1="90.4" x2="654.9" y2="92.2" stroke="#808080" stroke-width="0.8"/>
<line x1="657.4" y1="90.4" x2="657.4" y2="92.2" stroke="#808080" stroke-width="0.8"/>
<line x1="37" y1="93.2" x2="38.8" y2="93.2" stroke="#808080" stroke-width="0.8"/>
<line x1="34.4" y1="95.8" x2="39" y2="95.8" stroke="#1a1a1a" stroke-width="1"/>
<line x1="37" y1="98.4" x2="38.8" y2="98.4" stroke="#808080" stroke-width="0.8"/>
<line x1="37" y1="100.9" x2="38.8" y2="100.9" stroke="#808080" stroke-width="0.8"/>
<line x1="37" y1="103.5" x2="38.8" y2="103.5" stroke="#808080" stroke-width="0.8"/>
<line x1="37" y1="106.1" x2="38.8" y2="106.1" stroke="#808080" stroke-width="0.8"/>
<line x1="36" y1="108.6" x2="39" y2="108.6" stroke="#555" stroke-width="0.9"/>
<line x1="37" y1="111.2" x2="38.8" y2="111.2" stroke="#808080" stroke-width="0.8"/>
<line x1="37" y1="113.8" x2="38.8" y2="113.8" stroke="#808080" stroke-width="0.8"/>
<line x1="37" y1="116.4" x2="38.8" y2="116.4" stroke="#808080" stroke-width="0.8"/>
<line x1="37" y1="118.9" x2="38.8" y2="118.9" stroke="#808080" stroke-width="0.8"/>
<line x1="36" y1="121.5" x2="39" y2="121.5" stroke="#555" stroke-width="0.9"/>
<line x1="37" y1="124.1" x2="38.8" y2="124.1" stroke="#808080" stroke-width="0.8"/>
<line x1="37" y1="126.6" x2="38.8" y2="126.6" stroke="#808080" stroke-width="0.8"/>
<line x1="37" y1="129.2" x2="38.8" y2="129.2" stroke="#808080" stroke-width="0.8"/>
<line x1="37" y1="131.8" x2="38.8" y2="131.8" stroke="#808080" stroke-width="0.8"/>
<line x1="36" y1="134.3" x2="39" y2="134.3" stroke="#555" stroke-width="0.9"/>
<line x1="37" y1="136.9" x2="38.8" y2="136.9" stroke="#808080" stroke-width="0.8"/>
<line x1="37" y1="139.5" x2="38.8" y2="139.5" stroke="#808080" stroke-width="0.8"/>
<line x1="37" y1="142.1" x2="38.8" y2="142.1" stroke="#808080" stroke-width="0.8"/>
<line x1="37" y1="144.6" x2="38.8" y2="144.6" stroke="#808080" stroke-width="0.8"/>
<line x1="34.4" y1="147.2" x2="39" y2="147.2" stroke="#1a1a1a" stroke-width="1"/>
<line x1="37" y1="149.8" x2="38.8" y2="149.8" stroke="#808080" stroke-width="0.8"/>
<line x1="37" y1="152.3" x2="38.8" y2="152.3" stroke="#808080" stroke-width="0.8"/>
<line x1="37" y1="154.9" x2="38.8" y2="154.9" stroke="#808080" stroke-width="0.8"/>
<line x1="37" y1="157.5" x2="38.8" y2="157.5" stroke="#808080" stroke-width="0.8"/>
<line x1="36" y1="160.0" x2="39" y2="160.0" stroke="#555" stroke-width="0.9"/>
<line x1="37" y1="162.6" x2="38.8" y2="162.6" stroke="#808080" stroke-width="0.8"/>
<line x1="37" y1="165.2" x2="38.8" y2="165.2" stroke="#808080" stroke-width="0.8"/>
<line x1="37" y1="167.8" x2="38.8" y2="167.8" stroke="#808080" stroke-width="0.8"/>
<line x1="37" y1="170.3" x2="38.8" y2="170.3" stroke="#808080" stroke-width="0.8"/>
<line x1="36" y1="172.9" x2="39" y2="172.9" stroke="#555" stroke-width="0.9"/>
<line x1="37" y1="175.5" x2="38.8" y2="175.5" stroke="#808080" stroke-width="0.8"/>
<line x1="37" y1="178.0" x2="38.8" y2="178.0" stroke="#808080" stroke-width="0.8"/>
<line x1="37" y1="180.6" x2="38.8" y2="180.6" stroke="#808080" stroke-width="0.8"/>
<line x1="37" y1="183.2" x2="38.8" y2="183.2" stroke="#808080" stroke-width="0.8"/>
<line x1="36" y1="185.8" x2="39" y2="185.8" stroke="#555" stroke-width="0.9"/>
<line x1="37" y1="188.3" x2="38.8" y2="188.3" stroke="#808080" stroke-width="0.8"/>
<line x1="37" y1="190.9" x2="38.8" y2="190.9" stroke="#808080" stroke-width="0.8"/>
<line x1="37" y1="193.5" x2="38.8" y2="193.5" stroke="#808080" stroke-width="0.8"/>
<line x1="37" y1="196.0" x2="38.8" y2="196.0" stroke="#808080" stroke-width="0.8"/>
<line x1="34.4" y1="198.6" x2="39" y2="198.6" stroke="#1a1a1a" stroke-width="1"/>
<line x1="37" y1="201.2" x2="38.8" y2="201.2" stroke="#808080" stroke-width="0.8"/>
<line x1="37" y1="203.7" x2="38.8" y2="203.7" stroke="#808080" stroke-width="0.8"/>
<line x1="37" y1="206.3" x2="38.8" y2="206.3" stroke="#808080" stroke-width="0.8"/>
<line x1="37" y1="208.9" x2="38.8" y2="208.9" stroke="#808080" stroke-width="0.8"/>
<line x1="36" y1="211.4" x2="39" y2="211.4" stroke="#555" stroke-width="0.9"/>
<line x1="37" y1="214.0" x2="38.8" y2="214.0" stroke="#808080" stroke-width="0.8"/>
<line x1="37" y1="216.6" x2="38.8" y2="216.6" stroke="#808080" stroke-width="0.8"/>
<line x1="37" y1="219.2" x2="38.8" y2="219.2" stroke="#808080" stroke-width="0.8"/>
<line x1="37" y1="221.7" x2="38.8" y2="221.7" stroke="#808080" stroke-width="0.8"/>
<line x1="36" y1="224.3" x2="39" y2="224.3" stroke="#555" stroke-width="0.9"/>
<line x1="37" y1="226.9" x2="38.8" y2="226.9" stroke="#808080" stroke-width="0.8"/>
<line x1="37" y1="229.4" x2="38.8" y2="229.4" stroke="#808080" stroke-width="0.8"/>
<line x1="37" y1="232.0" x2="38.8" y2="232.0" stroke="#808080" stroke-width="0.8"/>
<line x1="37" y1="234.6" x2="38.8" y2="234.6" stroke="#808080" stroke-width="0.8"/>
<line x1="36" y1="237.1" x2="39" y2="237.1" stroke="#555" stroke-width="0.9"/>
<line x1="37" y1="239.7" x2="38.8" y2="239.7" stroke="#808080" stroke-width="0.8"/>
<line x1="37" y1="242.3" x2="38.8" y2="242.3" stroke="#808080" stroke-width="0.8"/>
<line x1="37" y1="244.9" x2="38.8" y2="244.9" stroke="#808080" stroke-width="0.8"/>
<line x1="37" y1="247.4" x2="38.8" y2="247.4" stroke="#808080" stroke-width="0.8"/>
<line x1="34.4" y1="250.0" x2="39" y2="250.0" stroke="#1a1a1a" stroke-width="1"/>
<line x1="37" y1="252.6" x2="38.8" y2="252.6" stroke="#808080" stroke-width="0.8"/>
<line x1="37" y1="255.1" x2="38.8" y2="255.1" stroke="#808080" stroke-width="0.8"/>
<line x1="37" y1="257.7" x2="38.8" y2="257.7" stroke="#808080" stroke-width="0.8"/>
<line x1="37" y1="260.3" x2="38.8" y2="260.3" stroke="#808080" stroke-width="0.8"/>
<line x1="36" y1="262.8" x2="39" y2="262.8" stroke="#555" stroke-width="0.9"/>
<line x1="37" y1="265.4" x2="38.8" y2="265.4" stroke="#808080" stroke-width="0.8"/>
<line x1="37" y1="268.0" x2="38.8" y2="268.0" stroke="#808080" stroke-width="0.8"/>
<line x1="37" y1="270.6" x2="38.8" y2="270.6" stroke="#808080" stroke-width="0.8"/>
<line x1="37" y1="273.1" x2="38.8" y2="273.1" stroke="#808080" stroke-width="0.8"/>
<line x1="36" y1="275.7" x2="39" y2="275.7" stroke="#555" stroke-width="0.9"/>
<line x1="37" y1="278.3" x2="38.8" y2="278.3" stroke="#808080" stroke-width="0.8"/>
<line x1="37" y1="280.8" x2="38.8" y2="280.8" stroke="#808080" stroke-width="0.8"/>
<line x1="37" y1="283.4" x2="38.8" y2="283.4" stroke="#808080" stroke-width="0.8"/>
<line x1="37" y1="286.0" x2="38.8" y2="286.0" stroke="#808080" stroke-width="0.8"/>
<line x1="36" y1="288.5" x2="39" y2="288.5" stroke="#555" stroke-width="0.9"/>
<line x1="37" y1="291.1" x2="38.8" y2="291.1" stroke="#808080" stroke-width="0.8"/>
<line x1="37" y1="293.7" x2="38.8" y2="293.7" stroke="#808080" stroke-width="0.8"/>
<line x1="37" y1="296.3" x2="38.8" y2="296.3" stroke="#808080" stroke-width="0.8"/>
<line x1="37" y1="298.8" x2="38.8" y2="298.8" stroke="#808080" stroke-width="0.8"/>
<line x1="34.4" y1="301.4" x2="39" y2="301.4" stroke="#1a1a1a" stroke-width="1"/>
<line x1="37" y1="304.0" x2="38.8" y2="304.0" stroke="#808080" stroke-width="0.8"/>
<line x1="37" y1="306.5" x2="38.8" y2="306.5" stroke="#808080" stroke-width="0.8"/>
<line x1="37" y1="309.1" x2="38.8" y2="309.1" stroke="#808080" stroke-width="0.8"/>
<line x1="37" y1="311.7" x2="38.8" y2="311.7" stroke="#808080" stroke-width="0.8"/>
<line x1="36" y1="314.2" x2="39" y2="314.2" stroke="#555" stroke-width="0.9"/>
<line x1="37" y1="316.8" x2="38.8" y2="316.8" stroke="#808080" stroke-width="0.8"/>
<line x1="37" y1="319.4" x2="38.8" y2="319.4" stroke="#808080" stroke-width="0.8"/>
<line x1="37" y1="322.0" x2="38.8" y2="322.0" stroke="#808080" stroke-width="0.8"/>
<line x1="37" y1="324.5" x2="38.8" y2="324.5" stroke="#808080" stroke-width="0.8"/>
<line x1="36" y1="327.1" x2="39" y2="327.1" stroke="#555" stroke-width="0.9"/>
<line x1="37" y1="329.7" x2="38.8" y2="329.7" stroke="#808080" stroke-width="0.8"/>
<line x1="37" y1="332.2" x2="38.8" y2="332.2" stroke="#808080" stroke-width="0.8"/>
<line x1="37" y1="334.8" x2="38.8" y2="334.8" stroke="#808080" stroke-width="0.8"/>
<line x1="37" y1="337.4" x2="38.8" y2="337.4" stroke="#808080" stroke-width="0.8"/>
<line x1="36" y1="339.9" x2="39" y2="339.9" stroke="#555" stroke-width="0.9"/>
<line x1="37" y1="342.5" x2="38.8" y2="342.5" stroke="#808080" stroke-width="0.8"/>
<line x1="37" y1="345.1" x2="38.8" y2="345.1" stroke="#808080" stroke-width="0.8"/>
<line x1="37" y1="347.7" x2="38.8" y2="347.7" stroke="#808080" stroke-width="0.8"/>
<line x1="37" y1="350.2" x2="38.8" y2="350.2" stroke="#808080" stroke-width="0.8"/>
<line x1="34.4" y1="352.8" x2="39" y2="352.8" stroke="#1a1a1a" stroke-width="1"/>
<line x1="37" y1="355.4" x2="38.8" y2="355.4" stroke="#808080" stroke-width="0.8"/>
<line x1="37" y1="357.9" x2="38.8" y2="357.9" stroke="#808080" stroke-width="0.8"/>
<line x1="37" y1="360.5" x2="38.8" y2="360.5" stroke="#808080" stroke-width="0.8"/>
<line x1="37" y1="363.1" x2="38.8" y2="363.1" stroke="#808080" stroke-width="0.8"/>
<line x1="36" y1="365.6" x2="39" y2="365.6" stroke="#555" stroke-width="0.9"/>
<line x1="37" y1="368.2" x2="38.8" y2="368.2" stroke="#808080" stroke-width="0.8"/>
<line x1="37" y1="370.8" x2="38.8" y2="370.8" stroke="#808080" stroke-width="0.8"/>
<line x1="37" y1="373.4" x2="38.8" y2="373.4" stroke="#808080" stroke-width="0.8"/>
<line x1="37" y1="375.9" x2="38.8" y2="375.9" stroke="#808080" stroke-width="0.8"/>
<line x1="36" y1="378.5" x2="39" y2="378.5" stroke="#555" stroke-width="0.9"/>
<line x1="37" y1="381.1" x2="38.8" y2="381.1" stroke="#808080" stroke-width="0.8"/>
<line x1="37" y1="383.6" x2="38.8" y2="383.6" stroke="#808080" stroke-width="0.8"/>
<line x1="37" y1="386.2" x2="38.8" y2="386.2" stroke="#808080" stroke-width="0.8"/>
<line x1="37" y1="388.8" x2="38.8" y2="388.8" stroke="#808080" stroke-width="0.8"/>
<line x1="36" y1="391.3" x2="39" y2="391.3" stroke="#555" stroke-width="0.9"/>
<line x1="37" y1="393.9" x2="38.8" y2="393.9" stroke="#808080" stroke-width="0.8"/>
<line x1="37" y1="396.5" x2="38.8" y2="396.5" stroke="#808080" stroke-width="0.8"/>
<line x1="37" y1="399.1" x2="38.8" y2="399.1" stroke="#808080" stroke-width="0.8"/>
<line x1="37" y1="401.6" x2="38.8" y2="401.6" stroke="#808080" stroke-width="0.8"/>
<line x1="34.4" y1="404.2" x2="39" y2="404.2" stroke="#1a1a1a" stroke-width="1"/>
<line x1="37" y1="406.8" x2="38.8" y2="406.8" stroke="#808080" stroke-width="0.8"/>
<line x1="37" y1="409.3" x2="38.8" y2="409.3" stroke="#808080" stroke-width="0.8"/>
<line x1="37" y1="411.9" x2="38.8" y2="411.9" stroke="#808080" stroke-width="0.8"/>
<line x1="37" y1="414.5" x2="38.8" y2="414.5" stroke="#808080" stroke-width="0.8"/>
<line x1="36" y1="417.0" x2="39" y2="417.0" stroke="#555" stroke-width="0.9"/>
<line x1="37" y1="419.6" x2="38.8" y2="419.6" stroke="#808080" stroke-width="0.8"/>
<line x1="37" y1="422.2" x2="38.8" y2="422.2" stroke="#808080" stroke-width="0.8"/>
<line x1="37" y1="424.8" x2="38.8" y2="424.8" stroke="#808080" stroke-width="0.8"/>
<line x1="37" y1="427.3" x2="38.8" y2="427.3" stroke="#808080" stroke-width="0.8"/>
<line x1="36" y1="429.9" x2="39" y2="429.9" stroke="#555" stroke-width="0.9"/>
<line x1="37" y1="432.5" x2="38.8" y2="432.5" stroke="#808080" stroke-width="0.8"/>
<line x1="37" y1="435.0" x2="38.8" y2="435.0" stroke="#808080" stroke-width="0.8"/>
<line x1="37" y1="437.6" x2="38.8" y2="437.6" stroke="#808080" stroke-width="0.8"/>
<line x1="37" y1="440.2" x2="38.8" y2="440.2" stroke="#808080" stroke-width="0.8"/>
<line x1="36" y1="442.7" x2="39" y2="442.7" stroke="#555" stroke-width="0.9"/>
<line x1="37" y1="445.3" x2="38.8" y2="445.3" stroke="#808080" stroke-width="0.8"/>
<line x1="37" y1="447.9" x2="38.8" y2="447.9" stroke="#808080" stroke-width="0.8"/>
<line x1="37" y1="450.5" x2="38.8" y2="450.5" stroke="#808080" stroke-width="0.8"/>
<line x1="37" y1="453.0" x2="38.8" y2="453.0" stroke="#808080" stroke-width="0.8"/>
<line x1="34.4" y1="455.6" x2="39" y2="455.6" stroke="#1a1a1a" stroke-width="1"/>
<line x1="37" y1="458.2" x2="38.8" y2="458.2" stroke="#808080" stroke-width="0.8"/>
<line x1="37" y1="460.7" x2="38.8" y2="460.7" stroke="#808080" stroke-width="0.8"/>
<line x1="37" y1="463.3" x2="38.8" y2="463.3" stroke="#808080" stroke-width="0.8"/>
<line x1="37" y1="465.9" x2="38.8" y2="465.9" stroke="#808080" stroke-width="0.8"/>
<line x1="36" y1="468.4" x2="39" y2="468.4" stroke="#555" stroke-width="0.9"/>
<line x1="37" y1="471.0" x2="38.8" y2="471.0" stroke="#808080" stroke-width="0.8"/>
<line x1="37" y1="473.6" x2="38.8" y2="473.6" stroke="#808080" stroke-width="0.8"/>
<line x1="37" y1="476.2" x2="38.8" y2="476.2" stroke="#808080" stroke-width="0.8"/>
<line x1="37" y1="478.7" x2="38.8" y2="478.7" stroke="#808080" stroke-width="0.8"/>
<line x1="36" y1="481.3" x2="39" y2="481.3" stroke="#555" stroke-width="0.9"/>
<line x1="37" y1="483.9" x2="38.8" y2="483.9" stroke="#808080" stroke-width="0.8"/>
<line x1="37" y1="486.4" x2="38.8" y2="486.4" stroke="#808080" stroke-width="0.8"/>
<line x1="37" y1="489.0" x2="38.8" y2="489.0" stroke="#808080" stroke-width="0.8"/>
<line x1="37" y1="491.6" x2="38.8" y2="491.6" stroke="#808080" stroke-width="0.8"/>
<line x1="36" y1="494.1" x2="39" y2="494.1" stroke="#555" stroke-width="0.9"/>
<line x1="37" y1="496.7" x2="38.8" y2="496.7" stroke="#808080" stroke-width="0.8"/>
<line x1="37" y1="499.3" x2="38.8" y2="499.3" stroke="#808080" stroke-width="0.8"/>
<line x1="37" y1="501.9" x2="38.8" y2="501.9" stroke="#808080" stroke-width="0.8"/>
<line x1="37" y1="504.4" x2="38.8" y2="504.4" stroke="#808080" stroke-width="0.8"/>
<line x1="34.4" y1="507.0" x2="39" y2="507.0" stroke="#1a1a1a" stroke-width="1"/>
<line x1="37" y1="509.6" x2="38.8" y2="509.6" stroke="#808080" stroke-width="0.8"/>
<line x1="37" y1="512.1" x2="38.8" y2="512.1" stroke="#808080" stroke-width="0.8"/>
<line x1="37" y1="514.7" x2="38.8" y2="514.7" stroke="#808080" stroke-width="0.8"/>
<line x1="37" y1="517.3" x2="38.8" y2="517.3" stroke="#808080" stroke-width="0.8"/>
<line x1="36" y1="519.8" x2="39" y2="519.8" stroke="#555" stroke-width="0.9"/>
<line x1="37" y1="522.4" x2="38.8" y2="522.4" stroke="#808080" stroke-width="0.8"/>
<line x1="37" y1="525.0" x2="38.8" y2="525.0" stroke="#808080" stroke-width="0.8"/>
<line x1="37" y1="527.6" x2="38.8" y2="527.6" stroke="#808080" stroke-width="0.8"/>
<line x1="37" y1="530.1" x2="38.8" y2="530.1" stroke="#808080" stroke-width="0.8"/>
<line x1="36" y1="532.7" x2="39" y2="532.7" stroke="#555" stroke-width="0.9"/>
<line x1="37" y1="535.3" x2="38.8" y2="535.3" stroke="#808080" stroke-width="0.8"/>
<line x1="37" y1="537.8" x2="38.8" y2="537.8" stroke="#808080" stroke-width="0.8"/>
<line x1="37" y1="540.4" x2="38.8" y2="540.4" stroke="#808080" stroke-width="0.8"/>
<line x1="37" y1="543.0" x2="38.8" y2="543.0" stroke="#808080" stroke-width="0.8"/>
<line x1="36" y1="545.5" x2="39" y2="545.5" stroke="#555" stroke-width="0.9"/>
<line x1="37" y1="548.1" x2="38.8" y2="548.1" stroke="#808080" stroke-width="0.8"/>
<line x1="37" y1="550.7" x2="38.8" y2="550.7" stroke="#808080" stroke-width="0.8"/>
<line x1="37" y1="553.3" x2="38.8" y2="553.3" stroke="#808080" stroke-width="0.8"/>
<line x1="37" y1="555.8" x2="38.8" y2="555.8" stroke="#808080" stroke-width="0.8"/>
<line x1="34.4" y1="558.4" x2="39" y2="558.4" stroke="#1a1a1a" stroke-width="1"/>
<text x="81.7" y="86.9" font-size="7.6" fill="#1a1a1a" stroke="#1a1a1a" stroke-width="0.15" textLength="10.4" lengthAdjust="spacingAndGlyphs">260</text>
<text x="133.1" y="86.9" font-size="7.6" fill="#1a1a1a" stroke="#1a1a1a" stroke-width="0.15" textLength="10.4" lengthAdjust="spacingAndGlyphs">280</text>
<text x="184.5" y="86.9" font-size="7.6" fill="#1a1a1a" stroke="#1a1a1a" stroke-width="0.15" textLength="10.4" lengthAdjust="spacingAndGlyphs">300</text>
<text x="235.9" y="86.9" font-size="7.6" fill="#1a1a1a" stroke="#1a1a1a" stroke-width="0.15" textLength="10.4" lengthAdjust="spacingAndGlyphs">320</text>
<text x="287.3" y="86.9" font-size="7.6" fill="#1a1a1a" stroke="#1a1a1a" stroke-width="0.15" textLength="10.4" lengthAdjust="spacingAndGlyphs">340</text>
<text x="338.7" y="86.9" font-size="7.6" fill="#1a1a1a" stroke="#1a1a1a" stroke-width="0.15" textLength="10.4" lengthAdjust="spacingAndGlyphs">360</text>
<text x="390.1" y="86.9" font-size="7.6" fill="#1a1a1a" stroke="#1a1a1a" stroke-width="0.15" textLength="10.4" lengthAdjust="spacingAndGlyphs">380</text>
<text x="441.5" y="86.9" font-size="7.6" fill="#1a1a1a" stroke="#1a1a1a" stroke-width="0.15" textLength="10.4" lengthAdjust="spacingAndGlyphs">400</text>
<text x="492.9" y="86.9" font-size="7.6" fill="#1a1a1a" stroke="#1a1a1a" stroke-width="0.15" textLength="10.4" lengthAdjust="spacingAndGlyphs">420</text>
<text x="544.3" y="86.9" font-size="7.6" fill="#1a1a1a" stroke="#1a1a1a" stroke-width="0.15" textLength="10.4" lengthAdjust="spacingAndGlyphs">440</text>
<text x="595.7" y="86.9" font-size="7.6" fill="#1a1a1a" stroke="#1a1a1a" stroke-width="0.15" textLength="10.4" lengthAdjust="spacingAndGlyphs">460</text>
<text x="0" y="0" transform="translate(34.2 101.0) rotate(-90)" font-size="7.6" fill="#1a1a1a" stroke="#1a1a1a" stroke-width="0.15" textLength="10.4" lengthAdjust="spacingAndGlyphs">260</text>
<text x="0" y="0" transform="translate(34.2 152.4) rotate(-90)" font-size="7.6" fill="#1a1a1a" stroke="#1a1a1a" stroke-width="0.15" textLength="10.4" lengthAdjust="spacingAndGlyphs">240</text>
<text x="0" y="0" transform="translate(34.2 203.8) rotate(-90)" font-size="7.6" fill="#1a1a1a" stroke="#1a1a1a" stroke-width="0.15" textLength="10.4" lengthAdjust="spacingAndGlyphs">220</text>
<text x="0" y="0" transform="translate(34.2 255.2) rotate(-90)" font-size="7.6" fill="#1a1a1a" stroke="#1a1a1a" stroke-width="0.15" textLength="10.4" lengthAdjust="spacingAndGlyphs">200</text>
<text x="0" y="0" transform="translate(34.2 306.6) rotate(-90)" font-size="7.6" fill="#1a1a1a" stroke="#1a1a1a" stroke-width="0.15" textLength="10.4" lengthAdjust="spacingAndGlyphs">180</text>
<text x="0" y="0" transform="translate(34.2 358.0) rotate(-90)" font-size="7.6" fill="#1a1a1a" stroke="#1a1a1a" stroke-width="0.15" textLength="10.4" lengthAdjust="spacingAndGlyphs">160</text>
<text x="0" y="0" transform="translate(34.2 409.4) rotate(-90)" font-size="7.6" fill="#1a1a1a" stroke="#1a1a1a" stroke-width="0.15" textLength="10.4" lengthAdjust="spacingAndGlyphs">140</text>
<text x="0" y="0" transform="translate(34.2 460.8) rotate(-90)" font-size="7.6" fill="#1a1a1a" stroke="#1a1a1a" stroke-width="0.15" textLength="10.4" lengthAdjust="spacingAndGlyphs">120</text>
<text x="0" y="0" transform="translate(34.2 512.2) rotate(-90)" font-size="7.6" fill="#1a1a1a" stroke="#1a1a1a" stroke-width="0.15" textLength="10.4" lengthAdjust="spacingAndGlyphs">100</text>
 </g>
 <!-- ruler corner icon -->
 <g stroke="#444" stroke-width="0.9" fill="none">
  <path d="M29.5 84 v7 h6.5" stroke="#999"/><path d="M31.5 84 h3 v3 M32 89 l3.5 -3.5" stroke="#555"/>
 </g>

 <!-- top dark bar & left strip -->
 <rect x="0" y="0" width="650" height="4.4" fill="#1a1a16"/>
 <rect x="0" y="4" width="4" height="553" fill="url(#lsg)"/>
 <line x1="3.4" y1="4" x2="3.4" y2="557" stroke="#7890a4" stroke-width="0.9"/>

 <!-- toolbar row 1 -->
 <rect x="4" y="4.4" width="646" height="19.8" fill="url(#tbg)"/>
 <line x1="4" y1="24.4" x2="650" y2="24.4" stroke="#d2d2d2" stroke-width="0.9"/>
 <!-- row 2 -->
 <rect x="4" y="24.9" width="646" height="24" fill="#f2f2f2"/>
 <line x1="4" y1="25.3" x2="650" y2="25.3" stroke="#fbfbfb" stroke-width="0.8"/>
 <line x1="4" y1="49.2" x2="650" y2="49.2" stroke="#d8d8d8" stroke-width="0.8"/>
 <!-- palette bg -->
 <rect x="24" y="49.8" width="626" height="27.4" fill="#f0f0f0"/>
 <line x1="24" y1="65" x2="650" y2="65" stroke="#fafafa" stroke-width="1.4"/>
 <!-- toolbox -->
 <rect x="4" y="49.8" width="20.5" height="507.2" fill="#f0f0f0"/>

 <!-- ROW1 ICONS -->
 <g>
  <!-- new -->
  <path d="M12.5 11.5 h5 l2 2 v6 h-7 z" fill="#fbfbfb" stroke="#444" stroke-width="1"/>
  <circle cx="18.8" cy="12.2" r="2.2" fill="#3aa040"/>
  <!-- open -->
  <path d="M30 12 h4 l1 1 h4 v6.5 h-9 z" fill="#d8d8d8" stroke="#333" stroke-width="1"/>
  <rect x="30" y="12" width="9" height="3" fill="#333"/>
  <!-- save -->
  <rect x="47.8" y="11" width="8.6" height="8.6" fill="#3e3e66"/>
  <rect x="49.6" y="11.6" width="5" height="3.2" fill="#e8e8f0"/>
  <!-- print -->
  <rect x="67.5" y="9.8" width="5" height="5" fill="#fafafa" stroke="#999" stroke-width="0.6"/>
  <rect x="65.2" y="14.6" width="9.6" height="5" fill="#fff" stroke="#2a2a2a" stroke-width="1.4"/>
  <!-- sep -->
  <line x1="82.8" y1="7" x2="82.8" y2="22" stroke="#dadada" stroke-width="1"/>
  <!-- cut -->
  <g stroke="#505050" stroke-width="1.3" fill="none">
   <circle cx="90.5" cy="12.3" r="2.1"/><circle cx="90.5" cy="17" r="2.1"/>
   <path d="M92.3 13.5 L99 18.5 M92.3 15.8 L99 10.2"/>
  </g>
  <!-- copy -->
  <rect x="108" y="11" width="6" height="7" fill="#e0e0e0" stroke="#b0b0b0" stroke-width="0.8"/>
  <rect x="111" y="13" width="6.5" height="7" fill="#d6d6d6" stroke="#a8a8a8" stroke-width="0.8"/>
  <!-- paste -->
  <rect x="124" y="10.5" width="6" height="6" fill="#222"/>
  <rect x="127.5" y="13.5" width="6.5" height="6.5" fill="#aaa" stroke="#777" stroke-width="0.6"/>
  <line x1="143.5" y1="7" x2="143.5" y2="22" stroke="#dadada" stroke-width="1"/>
  <!-- undo -->
  <path d="M150 14.3 h4.5 a3 3 0 0 1 0 6 h-1" fill="none" stroke="#404040" stroke-width="2.2"/>
  <path d="M147.5 14.3 l4 -4 v8 z" fill="#404040"/>
  <path d="M165 13.5 h4 l-2 2.5 z" fill="#333"/>
  <!-- redo -->
  <path d="M183 14.3 h-4.5 a3 3 0 0 0 0 6 h1" fill="none" stroke="#c4c4c4" stroke-width="2.2"/>
  <path d="M185.5 14.3 l-4 -4 v8 z" fill="#c4c4c4"/>
  <path d="M193 13.5 h4 l-2 2.5 z" fill="#c8c8c8"/>
  <line x1="203.5" y1="7" x2="203.5" y2="22" stroke="#dadada" stroke-width="1"/>
  <!-- corel connect purple -->
  <rect x="209.4" y="9" width="11.6" height="11" fill="#3a1c80"/>
  <path d="M211.5 11 l3.5 3 l-1 1 l4 3.5 M214.5 13.5 l3 -1.5" stroke="#fff" stroke-width="1.6" fill="none"/>
  <!-- import -->
  <rect x="238" y="10" width="6.5" height="6.5" fill="#f6f6f6" stroke="#b8b8b8" stroke-width="0.6"/>
  <path d="M233.5 13 h7" stroke="#c0202a" stroke-width="1.5"/><path d="M240 10.8 l2.5 2.2 l-2.5 2.2z" fill="#c0202a"/>
  <rect x="233" y="16" width="6" height="5" fill="#2a2a2a"/>
  <!-- export -->
  <rect x="255.5" y="10" width="6.5" height="6.5" fill="#f6f6f6" stroke="#b8b8b8" stroke-width="0.6"/>
  <path d="M251 13 h7" stroke="#c0202a" stroke-width="1.5"/><path d="M257.5 10.8 l2.5 2.2 l-2.5 2.2z" fill="#c0202a"/>
  <rect x="256.5" y="16" width="6" height="5" fill="#2a2a2a"/>
  <line x1="269.6" y1="7" x2="269.6" y2="22" stroke="#dadada" stroke-width="1"/>
  <!-- app launcher -->
  <rect x="275.8" y="10" width="9.4" height="5" fill="#3a3a3a"/>
  <rect x="277" y="11.5" width="7" height="2" fill="#fff"/>
  <path d="M277 15 h7 l-3.5 4 z" fill="#e06040"/>
  <path d="M292 13.5 h4 l-2 2.5 z" fill="#333"/>
  <!-- welcome -->
  <rect x="302.7" y="10" width="10" height="10" fill="#dfe3ee" stroke="#8890a8" stroke-width="1"/>
  <rect x="304.5" y="12" width="6" height="5" fill="#5a6a98"/>
  <line x1="320.4" y1="7" x2="320.4" y2="22" stroke="#dadada" stroke-width="1"/>
  <!-- zoom combo -->
  <rect x="326" y="8" width="58.6" height="14.2" fill="#ffffff" stroke="#e2e2e2" stroke-width="0.8"/>
  <text x="328.2" y="18.4" font-size="8.6" fill="#111" textLength="19.5" lengthAdjust="spacingAndGlyphs">100%</text>
  <path d="M377 13.8 h4.6 l-2.3 2.6 z" fill="#111"/>
  <line x1="391" y1="7" x2="391" y2="22" stroke="#dadada" stroke-width="1"/>
  <text x="397.7" y="18.6" font-size="9" fill="#222" textLength="27.5" lengthAdjust="spacingAndGlyphs">贴齐(P)</text>
  <path d="M433.7 13.8 h4 l-2 2.4 z" fill="#222"/>
  <g stroke="#888" stroke-width="0.9"><path d="M448 10 v10 M446 11.5 h5 M446 14.5 h6 M446 17.5 h4 M446 20 h5"/></g>
 </g>

 <!-- ROW2 -->
 <g>
  <!-- position icon -->
  <g fill="#9a9a9a"><rect x="12" y="32.5" width="2" height="2"/><rect x="16.5" y="32.5" width="2" height="2"/><rect x="21" y="32.5" width="2" height="2"/>
   <rect x="12" y="37" width="2" height="2"/><rect x="21" y="37" width="2" height="2"/>
   <rect x="12" y="41.5" width="2" height="2"/><rect x="16.5" y="41.5" width="2" height="2"/><rect x="21" y="41.5" width="2" height="2"/></g>
  <rect x="11.7" y="40.5" width="11.5" height="2.5" fill="#b8b8b8"/>
  <rect x="15.8" y="36.3" width="3.4" height="3.4" fill="#000"/>
  <text x="29.4" y="36.8" font-size="8.4" fill="#444" stroke="#444" stroke-width="0.15">x:</text>
  <text x="29.8" y="47" font-size="8.4" fill="#444" stroke="#444" stroke-width="0.15">y:</text>
  <rect x="38.6" y="27.8" width="49.7" height="20.8" fill="#fdfdfd" stroke="#e4e4e4" stroke-width="0.7"/>
  <text x="40.2" y="35.9" font-size="8.5" fill="#0a0a0a" stroke="#0a0a0a" stroke-width="0.18" textLength="40" lengthAdjust="spacingAndGlyphs">416.342 mm</text>
  <text x="40.2" y="46.9" font-size="8.5" fill="#0a0a0a" stroke="#0a0a0a" stroke-width="0.18" textLength="40" lengthAdjust="spacingAndGlyphs">147.754 mm</text>
  <!-- w/h icons -->
  <g stroke="#333" stroke-width="1" fill="none"><path d="M93.3 30 v5 M101.5 30 v5 M93.5 32.5 h8"/><path d="M96 40 h4 M96 47.5 h4 M98 40.5 v7"/></g>
  <path d="M94 32.5 l2 -1.8 v3.6z M101 32.5 l-2 -1.8 v3.6z" fill="#333"/>
  <path d="M98 41 l-1.8 2 h3.6z M98 47 l-1.8 -2 h3.6z" fill="#333"/>
  <rect x="103.4" y="27.8" width="51.2" height="20.8" fill="#fdfdfd" stroke="#e4e4e4" stroke-width="0.7"/>
  <text x="105" y="35.9" font-size="8.5" fill="#0a0a0a" stroke="#0a0a0a" stroke-width="0.18" textLength="28" lengthAdjust="spacingAndGlyphs">40.3 mm</text>
  <text x="105" y="46.9" font-size="8.5" fill="#0a0a0a" stroke="#0a0a0a" stroke-width="0.18" textLength="28" lengthAdjust="spacingAndGlyphs">40.3 mm</text>
  <line x1="161" y1="27" x2="161" y2="48" stroke="#dcdcdc" stroke-width="1"/>
  <rect x="166.5" y="27.8" width="29" height="20.8" fill="#fdfdfd" stroke="#e4e4e4" stroke-width="0.7"/>
  <text x="168.6" y="35.9" font-size="8.5" fill="#0a0a0a" stroke="#0a0a0a" stroke-width="0.18" textLength="18.4" lengthAdjust="spacingAndGlyphs">761.6</text>
  <text x="168.6" y="46.9" font-size="8.5" fill="#0a0a0a" stroke="#0a0a0a" stroke-width="0.18" textLength="18.4" lengthAdjust="spacingAndGlyphs">761.6</text>
  <text x="197.7" y="36.2" font-size="9.2" fill="#3a3a3a" stroke="#3a3a3a" stroke-width="0.15" textLength="6.5" lengthAdjust="spacingAndGlyphs">%</text>
  <text x="197.7" y="47" font-size="9.2" fill="#3a3a3a" stroke="#3a3a3a" stroke-width="0.15" textLength="6.5" lengthAdjust="spacingAndGlyphs">%</text>
  <!-- lock -->
  <rect x="212" y="37.3" width="5.2" height="3.8" fill="#6a6a6a"/>
  <path d="M213.1 37.3 v-1.2 a1.5 1.5 0 0 1 3 0 v1.2" fill="none" stroke="#888" stroke-width="0.9"/>
  <line x1="225.7" y1="27" x2="225.7" y2="48" stroke="#dcdcdc" stroke-width="1"/>
  <!-- rotate -->
  <path d="M231.2 37.7 a3.6 3.6 0 1 0 3.6 -3.6" fill="none" stroke="#333" stroke-width="1.5"/>
  <path d="M229.5 35 l3.5 -2 l0 4.5 z" fill="#333"/>
  <rect x="240.5" y="30.5" width="30.5" height="15.5" fill="#fdfdfd" stroke="#e4e4e4" stroke-width="0.7"/>
  <text x="242.3" y="40.2" font-size="8.2" fill="#0a0a0a" stroke="#0a0a0a" stroke-width="0.18" textLength="18.8" lengthAdjust="spacingAndGlyphs">180.0</text>
  <text x="274.5" y="38" font-size="7" fill="#999">°</text>
  <line x1="287.5" y1="27" x2="287.5" y2="48" stroke="#dcdcdc" stroke-width="1"/>
  <!-- mirror icons -->
  <g stroke="#888" stroke-width="0.9" fill="none">
   <path d="M300.5 31.5 v11 M296 42 h9.5"/><path d="M296 34 v7 h3 z M305 34 v7 h-3 z"/>
   <path d="M318.5 31.5 v11"/><path d="M314 34 h9 M314 38.5 h9 M315 36 h7 v4 M316 41 h6"/>
  </g>
  <line x1="330.5" y1="27" x2="330.5" y2="48" stroke="#dcdcdc" stroke-width="1"/>
  <!-- ellipse button (selected) -->
  <rect x="334.6" y="30.4" width="16" height="15.7" rx="1" fill="url(#btn)" stroke="#7a7a7a" stroke-width="1"/>
  <ellipse cx="342.6" cy="38.6" rx="3.6" ry="3.4" fill="#fafafa" stroke="#555" stroke-width="1"/>
  <!-- pie -->
  <path d="M364.6 38.6 H360.4 V34.4 A4.2 4.2 0 1 0 364.6 38.6" fill="#f6f6f6" stroke="#666" stroke-width="1.2"/>
  <!-- arc -->
  <path d="M381.7 38.6 A4.2 4.2 0 1 0 377.5 42.8" fill="none" stroke="#666" stroke-width="1.2"/>
  <line x1="389.5" y1="27" x2="389.5" y2="48" stroke="#dcdcdc" stroke-width="1"/>
  <!-- angle icons -->
  <g fill="none" stroke="#444" stroke-width="1.3">
   <path d="M397 35.5 a4 3.5 0 0 1 8 0"/><path d="M397 46.5 a4 3.5 0 0 1 8 0"/>
  </g>
  <path d="M400 36.5 l2 -3 l2 3z M400 46.5 l2 -3 l2 3z" fill="#333"/>
  <rect x="407.4" y="27" width="31.6" height="21.4" fill="#fdfdfd" stroke="#e4e4e4" stroke-width="0.7"/>
  <text x="409" y="36.1" font-size="8.2" fill="#0a0a0a" stroke="#0a0a0a" stroke-width="0.18" textLength="14.5" lengthAdjust="spacingAndGlyphs">90.0</text>
  <text x="409" y="47" font-size="8.2" fill="#0a0a0a" stroke="#0a0a0a" stroke-width="0.18" textLength="14.5" lengthAdjust="spacingAndGlyphs">90.0</text>
  <!-- spinners -->
  <g fill="#ececec" stroke="#c0c0c0" stroke-width="0.7">
   <rect x="439.8" y="28.5" width="5.4" height="8.5"/><rect x="445.5" y="28.5" width="5.4" height="8.5"/>
   <rect x="439.8" y="39.5" width="5.4" height="8.5"/><rect x="445.5" y="39.5" width="5.4" height="8.5"/>
  </g>
  <path d="M441 32 h3 l-1.5 2z M446.7 34 h3 l-1.5 -2z M441 43 h3 l-1.5 2z M446.7 45 h3 l-1.5 -2z" fill="#444"/>
  <g stroke="#aaa" stroke-width="0.8"><path d="M456 30.5 h4 M456 32.5 h4 M456 41.5 h4 M456 43.5 h4"/></g>
  <line x1="469" y1="27" x2="469" y2="48" stroke="#dcdcdc" stroke-width="1"/>
  <!-- faded convert icon -->
  <g fill="none" stroke="#d4d4d4" stroke-width="1.2"><path d="M480 34 h5 M479 38 a4 4 0 0 0 8 0 M484 32 v5"/></g>
  <line x1="494.2" y1="27" x2="494.2" y2="48" stroke="#dcdcdc" stroke-width="1"/>
  <!-- wrap icon -->
  <g stroke="#555" stroke-width="1" fill="none"><path d="M502 33 h10 M502 35.5 h3 M502 38 h3 M502 40.5 h3 M502 43 h10"/><rect x="505" y="34.8" width="6" height="6.5"/></g>
  <path d="M511 45 l3 -3 v3z" fill="#111"/>
  <line x1="519.6" y1="27" x2="519.6" y2="48" stroke="#dcdcdc" stroke-width="1"/>
  <!-- pen icon -->
  <path d="M527 41.5 h4.5 v-4 l-2.25 -4 l-2.25 4 z" fill="#e8e8e8" stroke="#555" stroke-width="0.9"/>
  <rect x="535.7" y="30.8" width="58.3" height="15.2" fill="#ffffff" stroke="#ececec" stroke-width="0.6"/>
  <text x="537.4" y="41.4" font-size="9" fill="#111" textLength="17.6" lengthAdjust="spacingAndGlyphs">细线</text>
  <path d="M587.6 37.3 h4.6 l-2.3 2.6 z" fill="#111"/>
  <line x1="603" y1="27" x2="603" y2="48" stroke="#dcdcdc" stroke-width="1"/>
  <g fill="none" stroke="#ccc" stroke-width="1"><rect x="608.5" y="34.5" width="5" height="4"/><rect x="611.5" y="37.5" width="5" height="4"/></g>
  <g fill="none" stroke="#7a4a5a" stroke-width="1"><rect x="627" y="33" width="6" height="5"/><rect x="630" y="36.5" width="6.5" height="6.5"/></g>
  <path d="M631 38 h5 v4 h-5z" fill="#d8a0b0"/>
  <line x1="643" y1="27" x2="643" y2="48" stroke="#dcdcdc" stroke-width="1"/>
  <path d="M648 38.5 l3 -2 v4z" fill="#555"/>
 </g>

 <!-- palette left controls -->
 <g>
  <line x1="27.5" y1="53" x2="27.5" y2="64" stroke="#c8c8c8" stroke-width="1"/>
  <line x1="27.5" y1="66" x2="27.5" y2="77" stroke="#c8c8c8" stroke-width="1"/>
  <circle cx="36" cy="58.3" r="4.4" fill="#f8f8f8" stroke="#c8c8c8" stroke-width="0.8"/>
  <path d="M34.6 56.2 l3.6 2.1 l-3.6 2.1z" fill="#111"/>
  <circle cx="36" cy="71.5" r="4.4" fill="#f8f8f8" stroke="#c8c8c8" stroke-width="0.8"/>
  <path d="M34.6 69.4 l3.6 2.1 l-3.6 2.1z" fill="#111"/>
  <path d="M44 62.5 l5 -5" stroke="#555" stroke-width="1.6"/><path d="M48 55 l3.5 3.5 l-2 0.8 l-2.3 -2.3z" fill="#222"/>
  <path d="M44 75.5 l5 -5" stroke="#c8c8c8" stroke-width="1.4"/>
  <circle cx="58.6" cy="58.6" r="1.3" fill="#bbb"/>
  <circle cx="58.6" cy="71.5" r="1.3" fill="#bbb"/>
  <rect x="64.9" y="52.5" width="12.2" height="11.7" fill="#fff" stroke="#333" stroke-width="0.9"/>
  <path d="M64.9 52.5 L77.1 64.2 M77.1 52.5 L64.9 64.2" stroke="#333" stroke-width="0.8"/>
  <rect x="64.9" y="65.8" width="12.2" height="11.4" fill="#fff" stroke="#333" stroke-width="0.9"/>
  <path d="M64.9 65.8 L77.1 77.2 M77.1 65.8 L64.9 77.2" stroke="#333" stroke-width="0.8"/>
 </g>
 <g>
 <rect x="76.10" y="52.5" width="11.60" height="11.7" fill="#000000"/>
<rect x="87.70" y="52.5" width="11.60" height="11.7" fill="#1e1e1e"/>
<rect x="99.30" y="52.5" width="11.60" height="11.7" fill="#333333"/>
<rect x="110.90" y="52.5" width="11.60" height="11.7" fill="#4a4a4a"/>
<rect x="122.50" y="52.5" width="11.60" height="11.7" fill="#5a5a5a"/>
<rect x="134.10" y="52.5" width="11.60" height="11.7" fill="#858585"/>
<rect x="145.70" y="52.5" width="11.60" height="11.7" fill="#9a9a9a"/>
<rect x="157.30" y="52.5" width="11.60" height="11.7" fill="#adadad"/>
<rect x="168.90" y="52.5" width="11.60" height="11.7" fill="#c6c6c6"/>
<rect x="180.50" y="52.5" width="11.60" height="11.7" fill="#e0e0e0"/>
<rect x="192.10" y="52.5" width="11.60" height="11.7" fill="#ffffff"/>
<rect x="203.70" y="52.5" width="11.60" height="11.7" fill="#0000f0"/>
<rect x="215.30" y="52.5" width="11.60" height="11.7" fill="#00ecff"/>
<rect x="226.90" y="52.5" width="11.60" height="11.7" fill="#00e020"/>
<rect x="238.50" y="52.5" width="11.60" height="11.7" fill="#ffff00"/>
<rect x="250.10" y="52.5" width="11.60" height="11.7" fill="#ff0000"/>
<rect x="261.70" y="52.5" width="11.60" height="11.7" fill="#ff10f0"/>
<rect x="273.30" y="52.5" width="11.60" height="11.7" fill="#8a10d8"/>
<rect x="284.90" y="52.5" width="11.60" height="11.7" fill="#ff6a00"/>
<rect x="296.50" y="52.5" width="11.60" height="11.7" fill="#f8a0c0"/>
<rect x="308.10" y="52.5" width="11.60" height="11.7" fill="#7a3434"/>
<rect x="319.70" y="52.5" width="11.60" height="11.7" fill="#c8c8f0"/>
<rect x="331.30" y="52.5" width="11.60" height="11.7" fill="#a8a0f0"/>
<rect x="342.90" y="52.5" width="11.60" height="11.7" fill="#6a9af0"/>
<rect x="354.50" y="52.5" width="11.60" height="11.7" fill="#6a6af0"/>
<rect x="366.10" y="52.5" width="11.60" height="11.7" fill="#7060c8"/>
<rect x="377.70" y="52.5" width="11.60" height="11.7" fill="#1a3a98"/>
<rect x="389.30" y="52.5" width="11.60" height="11.7" fill="#000070"/>
<rect x="400.90" y="52.5" width="11.60" height="11.7" fill="#3a6aaa"/>
<rect x="412.50" y="52.5" width="11.60" height="11.7" fill="#10c0f0"/>
<rect x="424.10" y="52.5" width="11.60" height="11.7" fill="#a0f0f8"/>
<rect x="435.70" y="52.5" width="11.60" height="11.7" fill="#a0d0d0"/>
<rect x="447.30" y="52.5" width="11.60" height="11.7" fill="#5a9898"/>
<rect x="458.90" y="52.5" width="11.60" height="11.7" fill="#3a7070"/>
<rect x="470.50" y="52.5" width="11.60" height="11.7" fill="#003838"/>
<rect x="482.10" y="52.5" width="11.60" height="11.7" fill="#108838"/>
<rect x="493.70" y="52.5" width="11.60" height="11.7" fill="#10a040"/>
<rect x="505.30" y="52.5" width="11.60" height="11.7" fill="#30a860"/>
<rect x="516.90" y="52.5" width="11.60" height="11.7" fill="#40c060"/>
<rect x="528.50" y="52.5" width="11.60" height="11.7" fill="#30b030"/>
<rect x="540.10" y="52.5" width="11.60" height="11.7" fill="#60f0c0"/>
<rect x="551.70" y="52.5" width="11.60" height="11.7" fill="#30c890"/>
<rect x="563.30" y="52.5" width="11.60" height="11.7" fill="#a0d0a0"/>
<rect x="574.90" y="52.5" width="11.60" height="11.7" fill="#c8f8c8"/>
<rect x="586.50" y="52.5" width="11.60" height="11.7" fill="#90f090"/>
<rect x="598.10" y="52.5" width="11.60" height="11.7" fill="#60a070"/>
<rect x="609.70" y="52.5" width="11.60" height="11.7" fill="#60a030"/>
<rect x="621.30" y="52.5" width="11.60" height="11.7" fill="#90c830"/>
<rect x="632.90" y="52.5" width="11.60" height="11.7" fill="#a0d070"/>
<rect x="644.50" y="52.5" width="11.60" height="11.7" fill="#90f010"/>
<rect x="76.10" y="65.8" width="11.60" height="11.4" fill="#2a1c1c"/>
<rect x="87.70" y="65.8" width="11.60" height="11.4" fill="#3a3a3a"/>
<rect x="99.30" y="65.8" width="11.60" height="11.4" fill="#4a4a4a"/>
<rect x="110.90" y="65.8" width="11.60" height="11.4" fill="#5f5f5f"/>
<rect x="122.50" y="65.8" width="11.60" height="11.4" fill="#777777"/>
<rect x="134.10" y="65.8" width="11.60" height="11.4" fill="#8a8a8a"/>
<rect x="145.70" y="65.8" width="11.60" height="11.4" fill="#9a9a9a"/>
<rect x="157.30" y="65.8" width="11.60" height="11.4" fill="#ababab"/>
<rect x="168.90" y="65.8" width="11.60" height="11.4" fill="#c4c4c4"/>
<rect x="180.50" y="65.8" width="11.60" height="11.4" fill="#dcdcdc"/>
<rect x="192.10" y="65.8" width="11.60" height="11.4" fill="#f4f4f4"/>
<rect x="203.70" y="65.8" width="11.60" height="11.4" fill="#2a2a80"/>
<rect x="215.30" y="65.8" width="11.60" height="11.4" fill="#1a9ae0"/>
<rect x="226.90" y="65.8" width="11.60" height="11.4" fill="#109040"/>
<rect x="238.50" y="65.8" width="11.60" height="11.4" fill="#f8e800"/>
<rect x="250.10" y="65.8" width="11.60" height="11.4" fill="#e8102a"/>
<rect x="261.70" y="65.8" width="11.60" height="11.4" fill="#e0108a"/>
<rect x="273.30" y="65.8" width="11.60" height="11.4" fill="#b8307a"/>
<rect x="284.90" y="65.8" width="11.60" height="11.4" fill="#f0901a"/>
<rect x="296.50" y="65.8" width="11.60" height="11.4" fill="#f0b0b0"/>
<rect x="308.10" y="65.8" width="11.60" height="11.4" fill="#8a6a6a"/>
<rect x="319.70" y="65.8" width="11.60" height="11.4" fill="#d0d0f0"/>
<rect x="331.30" y="65.8" width="11.60" height="11.4" fill="#a8a0d8"/>
<rect x="342.90" y="65.8" width="11.60" height="11.4" fill="#6a90d0"/>
<rect x="354.50" y="65.8" width="11.60" height="11.4" fill="#7a70c8"/>
<rect x="366.10" y="65.8" width="11.60" height="11.4" fill="#8a80c0"/>
<rect x="377.70" y="65.8" width="11.60" height="11.4" fill="#5a6a98"/>
<rect x="389.30" y="65.8" width="11.60" height="11.4" fill="#6a5a88"/>
<rect x="400.90" y="65.8" width="11.60" height="11.4" fill="#7a8aa8"/>
<rect x="412.50" y="65.8" width="11.60" height="11.4" fill="#1a8ad8"/>
<rect x="424.10" y="65.8" width="11.60" height="11.4" fill="#a8d0f0"/>
<rect x="435.70" y="65.8" width="11.60" height="11.4" fill="#b8c8d8"/>
<rect x="447.30" y="65.8" width="11.60" height="11.4" fill="#7898a0"/>
<rect x="458.90" y="65.8" width="11.60" height="11.4" fill="#6a8890"/>
<rect x="470.50" y="65.8" width="11.60" height="11.4" fill="#4a6060"/>
<rect x="482.10" y="65.8" width="11.60" height="11.4" fill="#708080"/>
<rect x="493.70" y="65.8" width="11.60" height="11.4" fill="#4a9888"/>
<rect x="505.30" y="65.8" width="11.60" height="11.4" fill="#6a9898"/>
<rect x="516.90" y="65.8" width="11.60" height="11.4" fill="#4aa090"/>
<rect x="528.50" y="65.8" width="11.60" height="11.4" fill="#5a9a80"/>
<rect x="540.10" y="65.8" width="11.60" height="11.4" fill="#60b8c8"/>
<rect x="551.70" y="65.8" width="11.60" height="11.4" fill="#40a0b0"/>
<rect x="563.30" y="65.8" width="11.60" height="11.4" fill="#b0c8b8"/>
<rect x="574.90" y="65.8" width="11.60" height="11.4" fill="#c8e0d0"/>
<rect x="586.50" y="65.8" width="11.60" height="11.4" fill="#b0d0b0"/>
<rect x="598.10" y="65.8" width="11.60" height="11.4" fill="#9aa898"/>
<rect x="609.70" y="65.8" width="11.60" height="11.4" fill="#a8b890"/>
<rect x="621.30" y="65.8" width="11.60" height="11.4" fill="#c0d070"/>
<rect x="632.90" y="65.8" width="11.60" height="11.4" fill="#c8d8a8"/>
<rect x="644.50" y="65.8" width="11.60" height="11.4" fill="#b0c820"/>
<line x1="76.10" y1="52.5" x2="76.10" y2="77.2" stroke="#4a4a4a" stroke-opacity="0.55" stroke-width="0.9"/>
<line x1="87.70" y1="52.5" x2="87.70" y2="77.2" stroke="#4a4a4a" stroke-opacity="0.55" stroke-width="0.9"/>
<line x1="99.30" y1="52.5" x2="99.30" y2="77.2" stroke="#4a4a4a" stroke-opacity="0.55" stroke-width="0.9"/>
<line x1="110.90" y1="52.5" x2="110.90" y2="77.2" stroke="#4a4a4a" stroke-opacity="0.55" stroke-width="0.9"/>
<line x1="122.50" y1="52.5" x2="122.50" y2="77.2" stroke="#4a4a4a" stroke-opacity="0.55" stroke-width="0.9"/>
<line x1="134.10" y1="52.5" x2="134.10" y2="77.2" stroke="#4a4a4a" stroke-opacity="0.55" stroke-width="0.9"/>
<line x1="145.70" y1="52.5" x2="145.70" y2="77.2" stroke="#4a4a4a" stroke-opacity="0.55" stroke-width="0.9"/>
<line x1="157.30" y1="52.5" x2="157.30" y2="77.2" stroke="#4a4a4a" stroke-opacity="0.55" stroke-width="0.9"/>
<line x1="168.90" y1="52.5" x2="168.90" y2="77.2" stroke="#4a4a4a" stroke-opacity="0.55" stroke-width="0.9"/>
<line x1="180.50" y1="52.5" x2="180.50" y2="77.2" stroke="#4a4a4a" stroke-opacity="0.55" stroke-width="0.9"/>
<line x1="192.10" y1="52.5" x2="192.10" y2="77.2" stroke="#4a4a4a" stroke-opacity="0.55" stroke-width="0.9"/>
<line x1="203.70" y1="52.5" x2="203.70" y2="77.2" stroke="#4a4a4a" stroke-opacity="0.55" stroke-width="0.9"/>
<line x1="215.30" y1="52.5" x2="215.30" y2="77.2" stroke="#4a4a4a" stroke-opacity="0.55" stroke-width="0.9"/>
<line x1="226.90" y1="52.5" x2="226.90" y2="77.2" stroke="#4a4a4a" stroke-opacity="0.55" stroke-width="0.9"/>
<line x1="238.50" y1="52.5" x2="238.50" y2="77.2" stroke="#4a4a4a" stroke-opacity="0.55" stroke-width="0.9"/>
<line x1="250.10" y1="52.5" x2="250.10" y2="77.2" stroke="#4a4a4a" stroke-opacity="0.55" stroke-width="0.9"/>
<line x1="261.70" y1="52.5" x2="261.70" y2="77.2" stroke="#4a4a4a" stroke-opacity="0.55" stroke-width="0.9"/>
<line x1="273.30" y1="52.5" x2="273.30" y2="77.2" stroke="#4a4a4a" stroke-opacity="0.55" stroke-width="0.9"/>
<line x1="284.90" y1="52.5" x2="284.90" y2="77.2" stroke="#4a4a4a" stroke-opacity="0.55" stroke-width="0.9"/>
<line x1="296.50" y1="52.5" x2="296.50" y2="77.2" stroke="#4a4a4a" stroke-opacity="0.55" stroke-width="0.9"/>
<line x1="308.10" y1="52.5" x2="308.10" y2="77.2" stroke="#4a4a4a" stroke-opacity="0.55" stroke-width="0.9"/>
<line x1="319.70" y1="52.5" x2="319.70" y2="77.2" stroke="#4a4a4a" stroke-opacity="0.55" stroke-width="0.9"/>
<line x1="331.30" y1="52.5" x2="331.30" y2="77.2" stroke="#4a4a4a" stroke-opacity="0.55" stroke-width="0.9"/>
<line x1="342.90" y1="52.5" x2="342.90" y2="77.2" stroke="#4a4a4a" stroke-opacity="0.55" stroke-width="0.9"/>
<line x1="354.50" y1="52.5" x2="354.50" y2="77.2" stroke="#4a4a4a" stroke-opacity="0.55" stroke-width="0.9"/>
<line x1="366.10" y1="52.5" x2="366.10" y2="77.2" stroke="#4a4a4a" stroke-opacity="0.55" stroke-width="0.9"/>
<line x1="377.70" y1="52.5" x2="377.70" y2="77.2" stroke="#4a4a4a" stroke-opacity="0.55" stroke-width="0.9"/>
<line x1="389.30" y1="52.5" x2="389.30" y2="77.2" stroke="#4a4a4a" stroke-opacity="0.55" stroke-width="0.9"/>
<line x1="400.90" y1="52.5" x2="400.90" y2="77.2" stroke="#4a4a4a" stroke-opacity="0.55" stroke-width="0.9"/>
<line x1="412.50" y1="52.5" x2="412.50" y2="77.2" stroke="#4a4a4a" stroke-opacity="0.55" stroke-width="0.9"/>
<line x1="424.10" y1="52.5" x2="424.10" y2="77.2" stroke="#4a4a4a" stroke-opacity="0.55" stroke-width="0.9"/>
<line x1="435.70" y1="52.5" x2="435.70" y2="77.2" stroke="#4a4a4a" stroke-opacity="0.55" stroke-width="0.9"/>
<line x1="447.30" y1="52.5" x2="447.30" y2="77.2" stroke="#4a4a4a" stroke-opacity="0.55" stroke-width="0.9"/>
<line x1="458.90" y1="52.5" x2="458.90" y2="77.2" stroke="#4a4a4a" stroke-opacity="0.55" stroke-width="0.9"/>
<line x1="470.50" y1="52.5" x2="470.50" y2="77.2" stroke="#4a4a4a" stroke-opacity="0.55" stroke-width="0.9"/>
<line x1="482.10" y1="52.5" x2="482.10" y2="77.2" stroke="#4a4a4a" stroke-opacity="0.55" stroke-width="0.9"/>
<line x1="493.70" y1="52.5" x2="493.70" y2="77.2" stroke="#4a4a4a" stroke-opacity="0.55" stroke-width="0.9"/>
<line x1="505.30" y1="52.5" x2="505.30" y2="77.2" stroke="#4a4a4a" stroke-opacity="0.55" stroke-width="0.9"/>
<line x1="516.90" y1="52.5" x2="516.90" y2="77.2" stroke="#4a4a4a" stroke-opacity="0.55" stroke-width="0.9"/>
<line x1="528.50" y1="52.5" x2="528.50" y2="77.2" stroke="#4a4a4a" stroke-opacity="0.55" stroke-width="0.9"/>
<line x1="540.10" y1="52.5" x2="540.10" y2="77.2" stroke="#4a4a4a" stroke-opacity="0.55" stroke-width="0.9"/>
<line x1="551.70" y1="52.5" x2="551.70" y2="77.2" stroke="#4a4a4a" stroke-opacity="0.55" stroke-width="0.9"/>
<line x1="563.30" y1="52.5" x2="563.30" y2="77.2" stroke="#4a4a4a" stroke-opacity="0.55" stroke-width="0.9"/>
<line x1="574.90" y1="52.5" x2="574.90" y2="77.2" stroke="#4a4a4a" stroke-opacity="0.55" stroke-width="0.9"/>
<line x1="586.50" y1="52.5" x2="586.50" y2="77.2" stroke="#4a4a4a" stroke-opacity="0.55" stroke-width="0.9"/>
<line x1="598.10" y1="52.5" x2="598.10" y2="77.2" stroke="#4a4a4a" stroke-opacity="0.55" stroke-width="0.9"/>
<line x1="609.70" y1="52.5" x2="609.70" y2="77.2" stroke="#4a4a4a" stroke-opacity="0.55" stroke-width="0.9"/>
<line x1="621.30" y1="52.5" x2="621.30" y2="77.2" stroke="#4a4a4a" stroke-opacity="0.55" stroke-width="0.9"/>
<line x1="632.90" y1="52.5" x2="632.90" y2="77.2" stroke="#4a4a4a" stroke-opacity="0.55" stroke-width="0.9"/>
<line x1="644.50" y1="52.5" x2="644.50" y2="77.2" stroke="#4a4a4a" stroke-opacity="0.55" stroke-width="0.9"/>
<line x1="656.10" y1="52.5" x2="656.10" y2="77.2" stroke="#4a4a4a" stroke-opacity="0.55" stroke-width="0.9"/>
 </g>
 <!-- selected swatch outlines -->
 <rect x="123.8" y="52.8" width="11.2" height="11.2" fill="none" stroke="#fff" stroke-width="1.6"/>
 <rect x="125" y="54" width="8.8" height="8.8" fill="none" stroke="#222" stroke-width="1"/>
 <rect x="76.6" y="66.3" width="11.2" height="10.6" fill="none" stroke="#fff" stroke-width="1.6"/>

 <!-- TOOLBOX ICONS -->
 <g>
  <!-- pick -->
  <path d="M11 59 l0 10 l2.5 -2.5 l2 3.5 l1.5 -1 l-2 -3.3 l3.5 0 z" fill="#d8d8d8" stroke="#999" stroke-width="0.8"/>
  <path d="M17 72 l4.5 -4.5 v4.5z" fill="#111"/>
  <!-- shape -->
  <path d="M11 78.5 l1.5 8 l2 -2 l3 3" fill="none" stroke="#888" stroke-width="1"/>
  <path d="M13 80 l7 4 l-4 4z" fill="#111"/>
  <path d="M18.5 89 l3 -3 v3z" fill="#111"/>
  <!-- crop -->
  <path d="M11 98 l8 8 M19 96 l-8 8 M13 96 v8 h8" stroke="#444" stroke-width="1.6" fill="none"/>
  <path d="M18.5 108 l3 -3 v3z" fill="#111"/>
  <!-- zoom -->
  <circle cx="14.5" cy="115.5" r="3.6" fill="#f4f4f4" stroke="#666" stroke-width="1.1"/>
  <path d="M17 118.5 l3 3" stroke="#444" stroke-width="1.8"/>
  <path d="M18.5 125.5 l3 -3 v3z" fill="#111"/>
  <!-- freehand -->
  <path d="M11 130.5 l8 8" stroke="#888" stroke-width="1" stroke-dasharray="1.5 1.5"/>
  <rect x="14" y="134" width="3.5" height="3.5" fill="#bbb"/>
  <path d="M18.5 142.5 l3 -3 v3z" fill="#111"/>
  <!-- smart fill -->
  <path d="M11 148 l4 4" stroke="#8a6a50" stroke-width="1.4"/>
  <rect x="13" y="152" width="7" height="6" fill="#7a7a7a" stroke="#444" stroke-width="0.7"/>
  <path d="M18.5 160 l3 -3 v3z" fill="#111"/>
  <!-- rectangle -->
  <rect x="11" y="167.5" width="8" height="7.8" fill="#f8f8f8" stroke="#8a8a8a" stroke-width="1.1"/>
  <path d="M18.5 177.5 l3 -3 v3z" fill="#111"/>
  <!-- ellipse selected -->
  <rect x="6.5" y="180.6" width="16" height="16" rx="1.2" fill="url(#btn)" stroke="#6a6a6a" stroke-width="1"/>
  <circle cx="14.2" cy="188" r="3.7" fill="#fafafa" stroke="#777" stroke-width="1.1"/>
  <path d="M19.5 195.5 l3 -3 v3z" fill="#111"/>
  <!-- polygon -->
  <path d="M14.6 204 l3.8 2.6 l-1.4 4.8 h-4.8 l-1.4 -4.8 z" fill="#f8f8f8" stroke="#8a8a8a" stroke-width="1.1"/>
  <path d="M18.5 213.5 l3 -3 v3z" fill="#111"/>
  <!-- basic shapes -->
  <circle cx="14" cy="223" r="3" fill="#eee" stroke="#555" stroke-width="1"/>
  <rect x="12.5" y="225" width="7" height="5" fill="#ddd" stroke="#555" stroke-width="1"/>
  <path d="M18.5 231.5 l3 -3 v3z" fill="#111"/>
  <!-- text -->
  <text x="10.5" y="245.5" font-size="11" fill="#333" textLength="10" lengthAdjust="spacingAndGlyphs">字</text>
  <!-- table -->
  <rect x="11" y="256" width="9.5" height="8" fill="#f4f4f4" stroke="#666" stroke-width="1"/>
  <path d="M11 259 h9.5 M11 261.5 h9.5 M14.2 256 v8 M17.3 256 v8" stroke="#777" stroke-width="0.7"/>
  <!-- dimension -->
  <path d="M11.5 283 l8 -9" stroke="#555" stroke-width="2"/>
  <path d="M18.5 285 l3 -3 v3z" fill="#111"/>
  <!-- connector -->
  <path d="M12 289.5 l6 8" stroke="#888" stroke-width="1.4"/>
  <path d="M18.5 301 l3 -3 v3z" fill="#111"/>
  <!-- blend -->
  <path d="M12 307 h8 v3 l-3 2.5 v3.5 h2.5 M12 307 v3 l3 2.5 v3.5 h-2.5" fill="#f4f4f4" stroke="#555" stroke-width="1"/>
  <path d="M18.5 319 l3 -3 v3z" fill="#111"/>
  <!-- eyedropper -->
  <path d="M17 327 l3 -3" stroke="#333" stroke-width="1.8"/>
  <rect x="11.5" y="329" width="6" height="5" fill="#d8a040" stroke="#8a6a20" stroke-width="0.6"/>
  <path d="M18.5 336.5 l3 -3 v3z" fill="#111"/>
  <!-- outline pen -->
  <path d="M12.5 352 h6 v-4 l-3 -7 l-3 7z" fill="#eee" stroke="#555" stroke-width="1"/>
  <path d="M18.5 354 l3 -3 v3z" fill="#111"/>
  <!-- fill bucket -->
  <path d="M11.5 365 l4 -4 l4 4 l-4 4z" fill="#eee" stroke="#444" stroke-width="1"/>
  <path d="M11.5 367 h8 l-1 3 h-6z" fill="#c87050"/>
  <path d="M18.5 373 l3 -3 v3z" fill="#111"/>
  <!-- interactive fill -->
  <path d="M13 380 l3 3" stroke="#777" stroke-width="1.2"/>
  <ellipse cx="15" cy="385.5" rx="4" ry="2.5" fill="#d8e8b0" stroke="#aaa" stroke-width="0.6"/>
  <path d="M18.5 390 l3 -3 v3z" fill="#111"/>
 </g>
</svg>
</body></html>
